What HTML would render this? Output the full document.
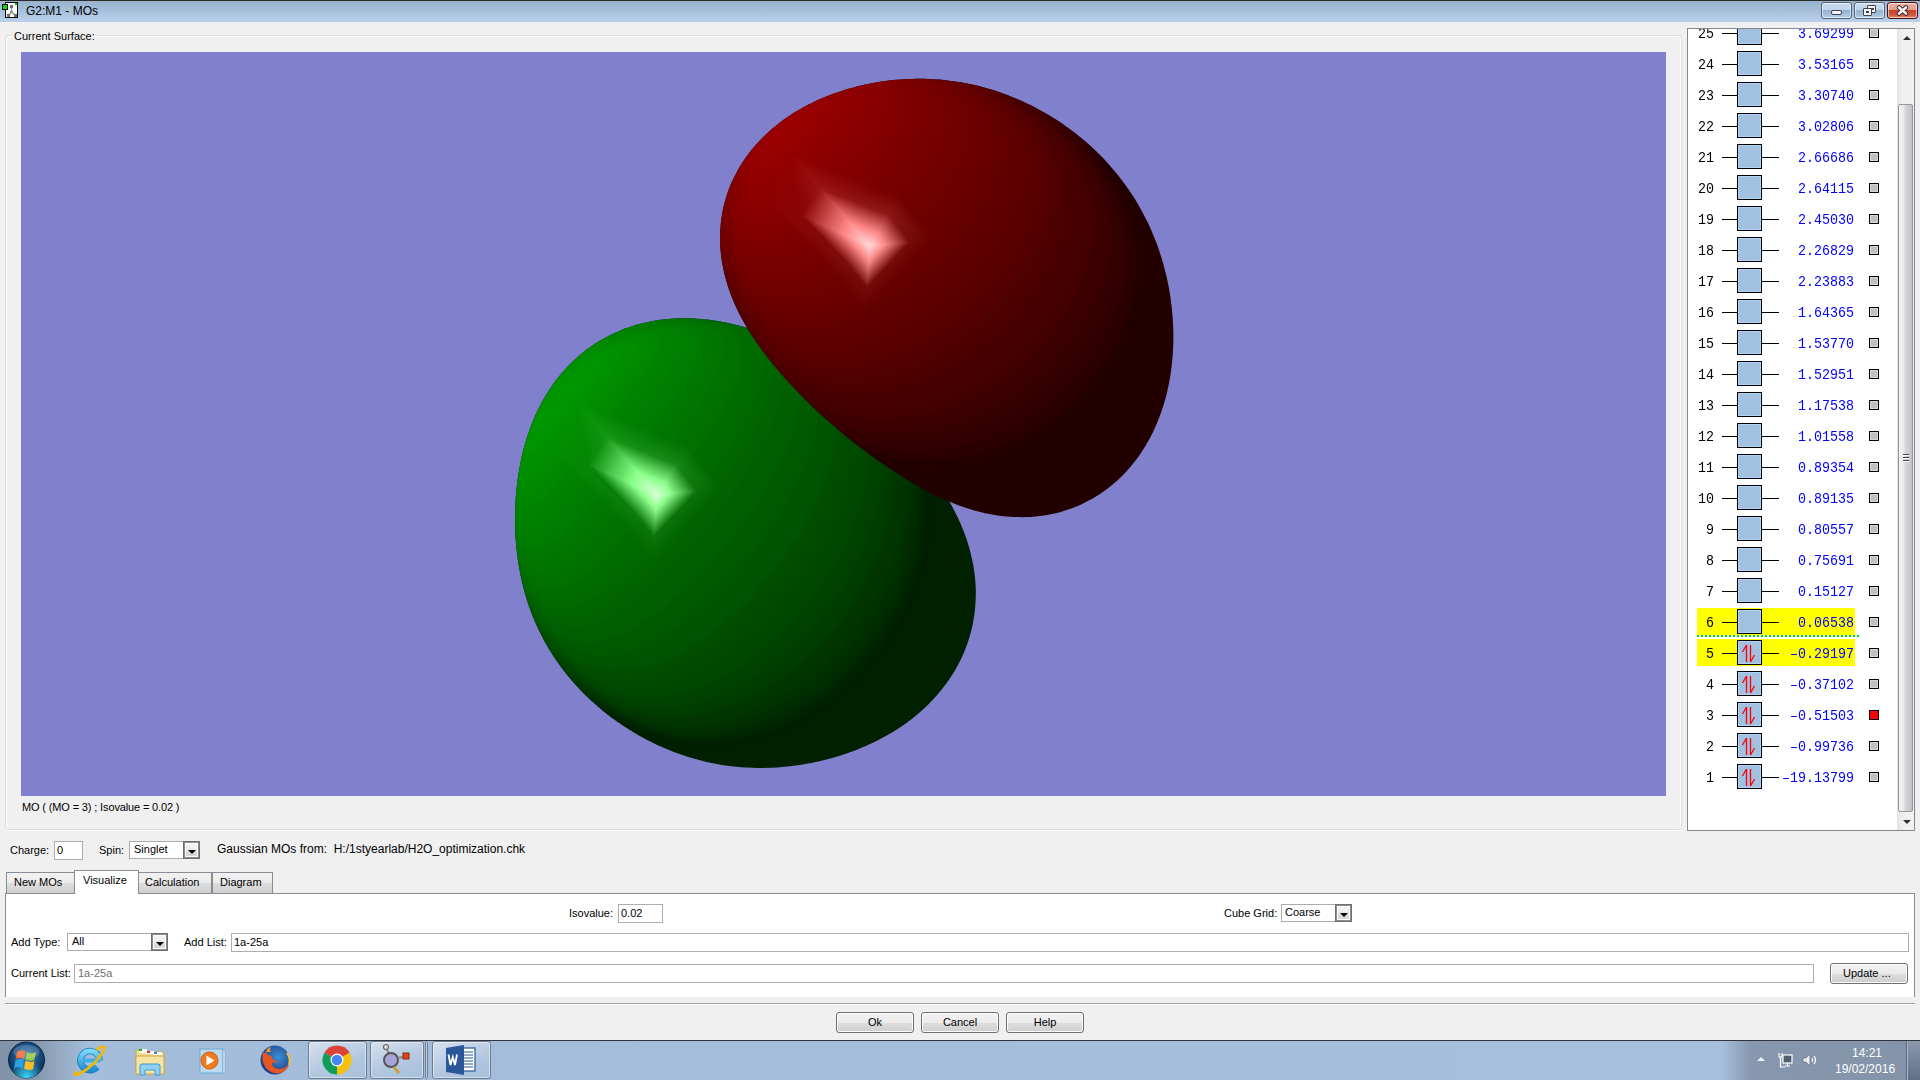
<!DOCTYPE html>
<html><head><meta charset="utf-8"><style>
*{margin:0;padding:0;box-sizing:border-box}
html,body{width:1920px;height:1080px;overflow:hidden;background:#f0f0f0;font-family:"Liberation Sans", sans-serif;font-size:11px;color:#000}
.a{position:absolute}
.t{position:absolute;white-space:pre;line-height:1}
.inp{position:absolute;background:#fff;border:1px solid #abadb3}
.cmb{position:absolute;background:#fff;border:1px solid #acacac}
.cbtn{position:absolute;top:-1px;right:-1px;bottom:-1px;width:17px;border:1px solid #6f6f6f;box-shadow:inset 0 0 0 1px #8c8c8c,inset 0 0 0 2px #fff;background:linear-gradient(#f4f4f4,#eeeeee 45%,#dedede 55%,#d2d2d2)}
.cbtn:after{content:"";position:absolute;left:4px;top:8px;border-left:4px solid transparent;border-right:4px solid transparent;border-top:4px solid #000}
.btn{position:absolute;border:1px solid #707070;border-radius:3px;background:linear-gradient(#f2f2f2,#ebebeb 50%,#dddddd 51%,#cfcfcf);box-shadow:inset 0 0 0 1px #fcfcfc}
.mn{font-family:"Liberation Mono", monospace;font-size:13.33px;line-height:1;transform:scaleY(1.12);transform-origin:0 0}
.box{width:25px;height:25px;border:1px solid #000;background:#a2c0e0;box-shadow:inset 0 0 0 1px #b0d2f6}
.chk{width:10px;height:10px;border:1px solid #000;box-shadow:inset 0 0 0 1px #d8d8d8}
.tab{position:absolute;border:1px solid #898c95;border-bottom:none;background:linear-gradient(#f2f2f2,#ebebeb 50%,#dddddd 51%,#cfcfcf)}
</style></head><body>
<div class="a" style="left:0;top:0;width:1920px;height:22px;background:linear-gradient(#98b1cd,#b9d1ea);border-top:1px solid #2a2a2a"></div>
<div class="t" style="left:26px;top:5px;font-size:12px;color:#000">G2:M1 - MOs</div>
<div class="a" style="left:6px;top:36px;width:1675px;height:795px;border:1px solid #fff;border-radius:3px"></div>
<div class="a" style="left:5px;top:35px;width:1677px;height:795px;border:1px solid #d5dfe5;border-radius:3px"></div>
<div class="t" style="left:12px;top:31px;padding:0 2px;background:#f0f0f0">Current Surface:</div>
<div class="a" style="left:21px;top:52px;width:1645px;height:744px;background:#8080cc;overflow:hidden"></div>
<svg class="a" style="left:21px;top:52px" width="1645" height="744" viewBox="21 52 1645 744"><defs><clipPath id="clr"><path d="M731.5 296.2 L730.0 292.3 L728.6 288.4 L727.4 284.5 L726.2 280.5 L725.1 276.4 L724.1 272.4 L723.2 268.2 L722.4 264.1 L721.7 259.9 L721.1 255.7 L720.7 251.4 L720.3 247.2 L720.1 242.9 L720.0 238.6 L720.1 234.3 L720.3 230.1 L720.6 225.8 L721.0 221.5 L721.6 217.2 L722.3 213.0 L723.1 208.8 L724.1 204.6 L725.2 200.4 L726.5 196.3 L727.8 192.2 L729.3 188.1 L730.9 184.1 L732.7 180.2 L734.6 176.3 L736.6 172.4 L738.7 168.6 L740.9 164.9 L743.2 161.3 L745.7 157.7 L748.2 154.2 L750.8 150.8 L753.6 147.5 L756.4 144.2 L759.3 141.0 L762.3 137.9 L765.4 134.9 L768.6 132.0 L771.8 129.1 L775.1 126.4 L778.4 123.7 L781.9 121.1 L785.3 118.6 L788.9 116.2 L792.4 113.8 L796.0 111.6 L799.7 109.4 L803.4 107.3 L807.1 105.3 L810.9 103.4 L814.7 101.6 L818.5 99.8 L822.3 98.1 L826.2 96.5 L830.0 95.0 L833.9 93.5 L837.8 92.2 L841.8 90.9 L845.7 89.6 L849.6 88.5 L853.6 87.4 L857.5 86.3 L861.5 85.4 L865.4 84.5 L869.4 83.7 L873.3 82.9 L877.3 82.2 L881.2 81.6 L885.2 81.0 L889.1 80.5 L893.0 80.1 L897.0 79.7 L900.9 79.4 L904.8 79.2 L908.7 79.0 L912.6 78.9 L916.5 78.8 L920.4 78.8 L924.3 78.8 L928.1 78.9 L932.0 79.1 L935.8 79.4 L939.6 79.6 L943.4 80.0 L947.2 80.4 L950.9 80.9 L954.7 81.4 L958.4 81.9 L962.1 82.6 L965.8 83.3 L969.5 84.0 L973.2 84.8 L976.8 85.6 L980.4 86.5 L984.0 87.5 L987.6 88.5 L991.1 89.5 L994.6 90.6 L998.1 91.8 L1001.6 93.0 L1005.1 94.2 L1008.5 95.5 L1011.9 96.9 L1015.3 98.2 L1018.6 99.7 L1021.9 101.1 L1025.2 102.7 L1028.5 104.2 L1031.8 105.8 L1035.0 107.5 L1038.2 109.2 L1041.3 110.9 L1044.5 112.7 L1047.6 114.5 L1050.7 116.3 L1053.7 118.2 L1056.7 120.1 L1059.7 122.1 L1062.7 124.1 L1065.6 126.2 L1068.5 128.3 L1071.4 130.4 L1074.3 132.5 L1077.1 134.7 L1079.9 137.0 L1082.7 139.2 L1085.4 141.6 L1088.1 143.9 L1090.7 146.3 L1093.4 148.7 L1096.0 151.2 L1098.5 153.7 L1101.1 156.2 L1103.6 158.8 L1106.0 161.4 L1108.5 164.0 L1110.8 166.7 L1113.2 169.4 L1115.5 172.2 L1117.8 175.0 L1120.0 177.8 L1122.2 180.7 L1124.4 183.6 L1126.5 186.5 L1128.6 189.5 L1130.6 192.5 L1132.6 195.5 L1134.6 198.6 L1136.5 201.7 L1138.3 204.8 L1140.1 208.0 L1141.9 211.2 L1143.6 214.4 L1145.3 217.7 L1147.0 221.0 L1148.6 224.3 L1150.1 227.6 L1151.6 231.0 L1153.0 234.4 L1154.4 237.8 L1155.8 241.3 L1157.1 244.8 L1158.4 248.3 L1159.6 251.9 L1160.7 255.4 L1161.9 259.0 L1162.9 262.6 L1163.9 266.3 L1164.9 269.9 L1165.8 273.6 L1166.7 277.3 L1167.5 281.1 L1168.3 284.8 L1169.0 288.6 L1169.7 292.4 L1170.3 296.2 L1170.8 300.0 L1171.3 303.9 L1171.8 307.8 L1172.2 311.7 L1172.5 315.6 L1172.8 319.5 L1173.0 323.5 L1173.2 327.4 L1173.3 331.4 L1173.4 335.4 L1173.3 339.4 L1173.3 343.5 L1173.1 347.5 L1172.9 351.6 L1172.7 355.6 L1172.3 359.7 L1171.9 363.8 L1171.4 367.8 L1170.9 371.9 L1170.3 376.0 L1169.6 380.1 L1168.8 384.2 L1167.9 388.3 L1167.0 392.4 L1166.0 396.5 L1164.9 400.5 L1163.7 404.6 L1162.4 408.6 L1161.0 412.7 L1159.6 416.6 L1158.0 420.6 L1156.4 424.6 L1154.6 428.5 L1152.8 432.4 L1150.9 436.2 L1148.9 440.0 L1146.7 443.7 L1144.5 447.4 L1142.2 451.1 L1139.8 454.7 L1137.3 458.2 L1134.7 461.6 L1132.0 465.0 L1129.2 468.3 L1126.3 471.5 L1123.3 474.7 L1120.2 477.7 L1117.1 480.7 L1113.8 483.5 L1110.5 486.3 L1107.0 489.0 L1103.5 491.5 L1100.0 494.0 L1096.3 496.3 L1092.6 498.5 L1088.8 500.6 L1085.0 502.6 L1081.1 504.5 L1077.1 506.2 L1073.1 507.8 L1069.1 509.3 L1065.0 510.6 L1060.8 511.9 L1056.7 512.9 L1052.5 513.9 L1048.3 514.8 L1044.0 515.5 L1039.8 516.1 L1035.5 516.5 L1031.3 516.9 L1027.0 517.1 L1022.7 517.2 L1018.5 517.1 L1014.3 517.0 L1010.0 516.8 L1005.9 516.4 L1001.7 516.0 L997.5 515.4 L993.4 514.7 L989.4 514.0 L985.3 513.2 L981.3 512.2 L977.3 511.2 L973.4 510.2 L969.6 509.0 L965.7 507.8 L962.0 506.5 L958.2 505.2 L954.6 503.8 L950.9 502.3 L947.4 500.8 L943.9 499.3 L940.4 497.7 L937.0 496.1 L933.6 494.4 L930.3 492.8 L927.0 491.1 L923.8 489.3 L920.6 487.6 L917.5 485.8 L914.4 484.1 L911.4 482.3 L908.4 480.5 L905.5 478.7 L902.5 476.9 L899.7 475.0 L896.8 473.2 L894.0 471.4 L891.3 469.6 L888.5 467.7 L885.8 465.9 L883.1 464.0 L880.5 462.2 L877.9 460.4 L875.3 458.5 L872.7 456.7 L870.1 454.8 L867.6 452.9 L865.1 451.1 L862.6 449.2 L860.1 447.3 L857.7 445.5 L855.2 443.6 L852.8 441.7 L850.4 439.8 L848.0 437.9 L845.7 435.9 L843.3 434.0 L840.9 432.0 L838.6 430.1 L836.3 428.1 L834.0 426.1 L831.7 424.1 L829.4 422.1 L827.1 420.1 L824.8 418.0 L822.5 416.0 L820.3 413.9 L818.0 411.8 L815.7 409.7 L813.5 407.5 L811.3 405.3 L809.0 403.2 L806.8 401.0 L804.5 398.7 L802.3 396.5 L800.1 394.2 L797.8 391.9 L795.6 389.5 L793.4 387.2 L791.1 384.8 L788.9 382.4 L786.7 379.9 L784.4 377.4 L782.2 374.9 L779.9 372.3 L777.7 369.7 L775.5 367.1 L773.3 364.4 L771.0 361.7 L768.8 358.9 L766.6 356.1 L764.4 353.2 L762.2 350.3 L760.1 347.4 L757.9 344.3 L755.8 341.3 L753.7 338.1 L751.6 335.0 L749.5 331.7 L747.5 328.4 L745.5 325.1 L743.6 321.7 L741.7 318.2 L739.8 314.7 L738.0 311.1 L736.3 307.5 L734.6 303.8 L733.0 300.0Z"/></clipPath><clipPath id="clg"><path d="M516.1 545.0 L515.8 541.0 L515.5 537.0 L515.3 533.0 L515.2 528.9 L515.1 524.9 L515.0 520.8 L515.0 516.8 L515.1 512.7 L515.2 508.6 L515.3 504.5 L515.6 500.4 L515.8 496.3 L516.2 492.2 L516.6 488.1 L517.1 483.9 L517.6 479.8 L518.2 475.7 L518.8 471.5 L519.6 467.4 L520.3 463.2 L521.2 459.1 L522.1 455.0 L523.1 450.8 L524.2 446.7 L525.4 442.6 L526.6 438.5 L528.0 434.4 L529.4 430.3 L530.8 426.3 L532.4 422.3 L534.1 418.3 L535.8 414.3 L537.7 410.4 L539.6 406.5 L541.7 402.6 L543.8 398.8 L546.0 395.0 L548.3 391.3 L550.7 387.7 L553.2 384.1 L555.8 380.5 L558.5 377.1 L561.3 373.7 L564.2 370.4 L567.1 367.1 L570.2 364.0 L573.3 360.9 L576.6 357.9 L579.9 355.0 L583.3 352.3 L586.7 349.6 L590.3 347.0 L593.9 344.5 L597.6 342.1 L601.4 339.9 L605.2 337.7 L609.1 335.7 L613.0 333.7 L617.0 331.9 L621.0 330.2 L625.1 328.6 L629.2 327.2 L633.3 325.8 L637.5 324.6 L641.7 323.5 L645.9 322.5 L650.2 321.6 L654.4 320.8 L658.7 320.1 L662.9 319.5 L667.2 319.1 L671.5 318.7 L675.7 318.5 L680.0 318.3 L684.2 318.3 L688.5 318.3 L692.7 318.4 L696.9 318.7 L701.1 319.0 L705.2 319.4 L709.3 319.8 L713.4 320.4 L717.5 321.0 L721.5 321.7 L725.5 322.5 L729.5 323.3 L733.4 324.2 L737.3 325.2 L741.2 326.2 L745.0 327.3 L748.8 328.4 L752.5 329.6 L756.2 330.9 L759.9 332.1 L763.5 333.5 L767.1 334.9 L770.6 336.3 L774.1 337.7 L777.6 339.2 L781.0 340.8 L784.4 342.4 L787.7 344.0 L791.0 345.6 L794.3 347.3 L797.5 349.0 L800.7 350.8 L803.8 352.5 L806.9 354.3 L810.0 356.2 L813.0 358.0 L816.0 359.9 L819.0 361.8 L821.9 363.8 L824.8 365.7 L827.7 367.7 L830.5 369.7 L833.3 371.8 L836.0 373.8 L838.7 375.9 L841.4 378.0 L844.1 380.1 L846.7 382.3 L849.3 384.4 L851.8 386.6 L854.4 388.8 L856.9 391.0 L859.4 393.2 L861.8 395.5 L864.3 397.7 L866.7 400.0 L869.1 402.3 L871.4 404.6 L873.8 406.9 L876.1 409.2 L878.4 411.6 L880.7 413.9 L883.0 416.3 L885.3 418.7 L887.6 421.1 L889.8 423.5 L892.0 425.9 L894.3 428.4 L896.5 430.8 L898.7 433.3 L900.9 435.8 L903.1 438.3 L905.3 440.9 L907.5 443.4 L909.7 446.0 L911.9 448.6 L914.1 451.3 L916.2 453.9 L918.4 456.6 L920.6 459.4 L922.7 462.1 L924.9 464.9 L927.0 467.7 L929.1 470.6 L931.3 473.5 L933.4 476.4 L935.4 479.4 L937.5 482.4 L939.6 485.5 L941.6 488.6 L943.6 491.8 L945.6 495.0 L947.5 498.2 L949.4 501.6 L951.3 504.9 L953.1 508.3 L954.9 511.8 L956.6 515.3 L958.3 518.8 L960.0 522.4 L961.5 526.1 L963.0 529.8 L964.5 533.5 L965.9 537.3 L967.2 541.1 L968.4 545.0 L969.5 548.9 L970.6 552.9 L971.5 556.9 L972.4 560.9 L973.2 565.0 L973.9 569.1 L974.5 573.2 L975.0 577.3 L975.3 581.5 L975.6 585.7 L975.8 589.9 L975.8 594.1 L975.7 598.3 L975.5 602.5 L975.2 606.7 L974.8 610.9 L974.3 615.1 L973.6 619.3 L972.9 623.5 L972.0 627.6 L971.0 631.7 L969.8 635.8 L968.6 639.9 L967.2 643.9 L965.7 647.9 L964.2 651.9 L962.5 655.8 L960.7 659.7 L958.7 663.5 L956.7 667.2 L954.6 670.9 L952.4 674.6 L950.0 678.2 L947.6 681.7 L945.1 685.1 L942.5 688.5 L939.8 691.8 L937.1 695.1 L934.2 698.2 L931.3 701.3 L928.3 704.4 L925.3 707.3 L922.1 710.2 L919.0 713.0 L915.7 715.7 L912.4 718.4 L909.1 720.9 L905.7 723.4 L902.2 725.9 L898.7 728.2 L895.2 730.5 L891.6 732.7 L888.0 734.8 L884.4 736.8 L880.7 738.8 L877.0 740.7 L873.3 742.5 L869.5 744.3 L865.8 746.0 L862.0 747.6 L858.2 749.2 L854.4 750.7 L850.5 752.1 L846.7 753.5 L842.8 754.8 L838.9 756.0 L835.1 757.2 L831.2 758.3 L827.3 759.3 L823.4 760.3 L819.5 761.2 L815.5 762.1 L811.6 762.9 L807.7 763.6 L803.8 764.3 L799.8 764.9 L795.9 765.5 L792.0 766.0 L788.0 766.5 L784.1 766.8 L780.2 767.2 L776.3 767.4 L772.3 767.7 L768.4 767.8 L764.5 767.9 L760.6 767.9 L756.7 767.9 L752.8 767.8 L748.9 767.6 L745.0 767.4 L741.1 767.2 L737.3 766.8 L733.4 766.4 L729.5 766.0 L725.7 765.4 L721.9 764.9 L718.1 764.2 L714.3 763.5 L710.5 762.8 L706.7 762.0 L703.0 761.1 L699.3 760.1 L695.6 759.1 L691.9 758.1 L688.2 757.0 L684.6 755.8 L680.9 754.6 L677.3 753.3 L673.7 752.0 L670.2 750.6 L666.6 749.1 L663.1 747.6 L659.6 746.1 L656.2 744.5 L652.8 742.8 L649.3 741.1 L646.0 739.4 L642.6 737.6 L639.3 735.7 L636.0 733.8 L632.7 731.8 L629.5 729.8 L626.3 727.8 L623.1 725.7 L620.0 723.6 L616.9 721.4 L613.8 719.1 L610.7 716.9 L607.7 714.6 L604.7 712.2 L601.8 709.8 L598.8 707.3 L596.0 704.8 L593.1 702.3 L590.3 699.7 L587.5 697.1 L584.8 694.4 L582.1 691.7 L579.5 688.9 L576.8 686.1 L574.3 683.2 L571.8 680.4 L569.3 677.4 L566.8 674.4 L564.4 671.4 L562.1 668.4 L559.8 665.3 L557.6 662.1 L555.4 658.9 L553.2 655.7 L551.2 652.5 L549.1 649.2 L547.1 645.8 L545.2 642.4 L543.4 639.0 L541.6 635.6 L539.8 632.1 L538.1 628.6 L536.5 625.0 L534.9 621.5 L533.4 617.9 L532.0 614.2 L530.6 610.6 L529.2 606.9 L528.0 603.2 L526.8 599.4 L525.6 595.6 L524.5 591.9 L523.5 588.1 L522.6 584.2 L521.7 580.4 L520.8 576.5 L520.0 572.6 L519.3 568.7 L518.6 564.8 L518.0 560.9 L517.5 556.9 L517.0 553.0 L516.5 549.0Z"/></clipPath><filter id="bl" x="-5%" y="-5%" width="110%" height="110%"><feGaussianBlur stdDeviation="2"/></filter><linearGradient id="hg0" gradientUnits="userSpaceOnUse" x1="671.33" y1="457.67" x2="654.47" y2="501.59"><stop offset="0" stop-color="#ffffff" stop-opacity="0"/><stop offset="1" stop-color="#ffffff"/></linearGradient><linearGradient id="hg1" gradientUnits="userSpaceOnUse" x1="614.83" y1="417.00" x2="517.01" y2="666.98"><stop offset="0" stop-color="#ffffff" stop-opacity="0"/><stop offset="1" stop-color="#ffffff"/></linearGradient><linearGradient id="hg2" gradientUnits="userSpaceOnUse" x1="613.34" y1="419.12" x2="534.05" y2="642.60"><stop offset="0" stop-color="#ffffff" stop-opacity="0"/><stop offset="1" stop-color="#ffffff"/></linearGradient><linearGradient id="hg3" gradientUnits="userSpaceOnUse" x1="687.65" y1="474.15" x2="651.59" y2="498.68"><stop offset="0" stop-color="#ffffff" stop-opacity="0"/><stop offset="1" stop-color="#ffffff"/></linearGradient><linearGradient id="hg4" gradientUnits="userSpaceOnUse" x1="692.12" y1="451.46" x2="513.04" y2="590.75"><stop offset="0" stop-color="#ffffff" stop-opacity="0"/><stop offset="1" stop-color="#ffffff"/></linearGradient><linearGradient id="hg5" gradientUnits="userSpaceOnUse" x1="724.06" y1="478.42" x2="190.11" y2="318.23"><stop offset="0" stop-color="#ffffff" stop-opacity="0"/><stop offset="1" stop-color="#ffffff"/></linearGradient><linearGradient id="hg6" gradientUnits="userSpaceOnUse" x1="677.31" y1="513.98" x2="653.42" y2="491.65"><stop offset="0" stop-color="#ffffff" stop-opacity="0"/><stop offset="1" stop-color="#ffffff"/></linearGradient><linearGradient id="hg7" gradientUnits="userSpaceOnUse" x1="708.61" y1="501.85" x2="418.34" y2="230.51"><stop offset="0" stop-color="#ffffff" stop-opacity="0"/><stop offset="1" stop-color="#ffffff"/></linearGradient><linearGradient id="hg8" gradientUnits="userSpaceOnUse" x1="708.61" y1="501.85" x2="418.34" y2="230.51"><stop offset="0" stop-color="#ffffff" stop-opacity="0"/><stop offset="1" stop-color="#ffffff"/></linearGradient><linearGradient id="hg9" gradientUnits="userSpaceOnUse" x1="633.54" y1="514.02" x2="661.14" y2="491.64"><stop offset="0" stop-color="#ffffff" stop-opacity="0"/><stop offset="1" stop-color="#ffffff"/></linearGradient><linearGradient id="hg10" gradientUnits="userSpaceOnUse" x1="640.63" y1="547.58" x2="974.89" y2="282.96"><stop offset="0" stop-color="#ffffff" stop-opacity="0"/><stop offset="1" stop-color="#ffffff"/></linearGradient><linearGradient id="hg11" gradientUnits="userSpaceOnUse" x1="644.35" y1="546.56" x2="885.56" y2="307.56"><stop offset="0" stop-color="#ffffff" stop-opacity="0"/><stop offset="1" stop-color="#ffffff"/></linearGradient><linearGradient id="hg12" gradientUnits="userSpaceOnUse" x1="634.92" y1="515.52" x2="660.90" y2="491.38"><stop offset="0" stop-color="#ffffff" stop-opacity="0"/><stop offset="1" stop-color="#ffffff"/></linearGradient><linearGradient id="hg13" gradientUnits="userSpaceOnUse" x1="622.73" y1="524.77" x2="868.13" y2="289.38"><stop offset="0" stop-color="#ffffff" stop-opacity="0"/><stop offset="1" stop-color="#ffffff"/></linearGradient><linearGradient id="hg14" gradientUnits="userSpaceOnUse" x1="544.55" y1="448.27" x2="2353.60" y2="1742.90"><stop offset="0" stop-color="#ffffff" stop-opacity="0"/><stop offset="1" stop-color="#ffffff"/></linearGradient><linearGradient id="hg15" gradientUnits="userSpaceOnUse" x1="587.16" y1="461.53" x2="669.32" y2="500.91"><stop offset="0" stop-color="#ffffff" stop-opacity="0"/><stop offset="1" stop-color="#ffffff"/></linearGradient><linearGradient id="hg16" gradientUnits="userSpaceOnUse" x1="551.56" y1="438.36" x2="2373.69" y2="1720.59"><stop offset="0" stop-color="#ffffff" stop-opacity="0"/><stop offset="1" stop-color="#ffffff"/></linearGradient><linearGradient id="hg17" gradientUnits="userSpaceOnUse" x1="581.10" y1="464.45" x2="925.93" y2="441.73"><stop offset="0" stop-color="#ffffff" stop-opacity="0"/><stop offset="1" stop-color="#ffffff"/></linearGradient><linearGradient id="hr0" gradientUnits="userSpaceOnUse" x1="884.33" y1="208.67" x2="867.47" y2="252.59"><stop offset="0" stop-color="#ffffff" stop-opacity="0"/><stop offset="1" stop-color="#ffffff"/></linearGradient><linearGradient id="hr1" gradientUnits="userSpaceOnUse" x1="827.83" y1="168.00" x2="730.01" y2="417.98"><stop offset="0" stop-color="#ffffff" stop-opacity="0"/><stop offset="1" stop-color="#ffffff"/></linearGradient><linearGradient id="hr2" gradientUnits="userSpaceOnUse" x1="826.34" y1="170.12" x2="747.05" y2="393.60"><stop offset="0" stop-color="#ffffff" stop-opacity="0"/><stop offset="1" stop-color="#ffffff"/></linearGradient><linearGradient id="hr3" gradientUnits="userSpaceOnUse" x1="900.65" y1="225.15" x2="864.59" y2="249.68"><stop offset="0" stop-color="#ffffff" stop-opacity="0"/><stop offset="1" stop-color="#ffffff"/></linearGradient><linearGradient id="hr4" gradientUnits="userSpaceOnUse" x1="905.12" y1="202.46" x2="726.04" y2="341.75"><stop offset="0" stop-color="#ffffff" stop-opacity="0"/><stop offset="1" stop-color="#ffffff"/></linearGradient><linearGradient id="hr5" gradientUnits="userSpaceOnUse" x1="937.06" y1="229.42" x2="403.11" y2="69.23"><stop offset="0" stop-color="#ffffff" stop-opacity="0"/><stop offset="1" stop-color="#ffffff"/></linearGradient><linearGradient id="hr6" gradientUnits="userSpaceOnUse" x1="890.31" y1="264.98" x2="866.42" y2="242.65"><stop offset="0" stop-color="#ffffff" stop-opacity="0"/><stop offset="1" stop-color="#ffffff"/></linearGradient><linearGradient id="hr7" gradientUnits="userSpaceOnUse" x1="921.61" y1="252.85" x2="631.34" y2="-18.49"><stop offset="0" stop-color="#ffffff" stop-opacity="0"/><stop offset="1" stop-color="#ffffff"/></linearGradient><linearGradient id="hr8" gradientUnits="userSpaceOnUse" x1="921.61" y1="252.85" x2="631.34" y2="-18.49"><stop offset="0" stop-color="#ffffff" stop-opacity="0"/><stop offset="1" stop-color="#ffffff"/></linearGradient><linearGradient id="hr9" gradientUnits="userSpaceOnUse" x1="846.54" y1="265.02" x2="874.14" y2="242.64"><stop offset="0" stop-color="#ffffff" stop-opacity="0"/><stop offset="1" stop-color="#ffffff"/></linearGradient><linearGradient id="hr10" gradientUnits="userSpaceOnUse" x1="853.63" y1="298.58" x2="1187.89" y2="33.96"><stop offset="0" stop-color="#ffffff" stop-opacity="0"/><stop offset="1" stop-color="#ffffff"/></linearGradient><linearGradient id="hr11" gradientUnits="userSpaceOnUse" x1="857.35" y1="297.56" x2="1098.56" y2="58.56"><stop offset="0" stop-color="#ffffff" stop-opacity="0"/><stop offset="1" stop-color="#ffffff"/></linearGradient><linearGradient id="hr12" gradientUnits="userSpaceOnUse" x1="847.92" y1="266.52" x2="873.90" y2="242.38"><stop offset="0" stop-color="#ffffff" stop-opacity="0"/><stop offset="1" stop-color="#ffffff"/></linearGradient><linearGradient id="hr13" gradientUnits="userSpaceOnUse" x1="835.73" y1="275.77" x2="1081.13" y2="40.38"><stop offset="0" stop-color="#ffffff" stop-opacity="0"/><stop offset="1" stop-color="#ffffff"/></linearGradient><linearGradient id="hr14" gradientUnits="userSpaceOnUse" x1="757.55" y1="199.27" x2="2566.60" y2="1493.90"><stop offset="0" stop-color="#ffffff" stop-opacity="0"/><stop offset="1" stop-color="#ffffff"/></linearGradient><linearGradient id="hr15" gradientUnits="userSpaceOnUse" x1="800.16" y1="212.53" x2="882.32" y2="251.91"><stop offset="0" stop-color="#ffffff" stop-opacity="0"/><stop offset="1" stop-color="#ffffff"/></linearGradient><linearGradient id="hr16" gradientUnits="userSpaceOnUse" x1="764.56" y1="189.36" x2="2586.69" y2="1471.59"><stop offset="0" stop-color="#ffffff" stop-opacity="0"/><stop offset="1" stop-color="#ffffff"/></linearGradient><linearGradient id="hr17" gradientUnits="userSpaceOnUse" x1="794.10" y1="215.45" x2="1138.93" y2="192.73"><stop offset="0" stop-color="#ffffff" stop-opacity="0"/><stop offset="1" stop-color="#ffffff"/></linearGradient></defs><path d="M516.1 545.0 L515.8 541.0 L515.5 537.0 L515.3 533.0 L515.2 528.9 L515.1 524.9 L515.0 520.8 L515.0 516.8 L515.1 512.7 L515.2 508.6 L515.3 504.5 L515.6 500.4 L515.8 496.3 L516.2 492.2 L516.6 488.1 L517.1 483.9 L517.6 479.8 L518.2 475.7 L518.8 471.5 L519.6 467.4 L520.3 463.2 L521.2 459.1 L522.1 455.0 L523.1 450.8 L524.2 446.7 L525.4 442.6 L526.6 438.5 L528.0 434.4 L529.4 430.3 L530.8 426.3 L532.4 422.3 L534.1 418.3 L535.8 414.3 L537.7 410.4 L539.6 406.5 L541.7 402.6 L543.8 398.8 L546.0 395.0 L548.3 391.3 L550.7 387.7 L553.2 384.1 L555.8 380.5 L558.5 377.1 L561.3 373.7 L564.2 370.4 L567.1 367.1 L570.2 364.0 L573.3 360.9 L576.6 357.9 L579.9 355.0 L583.3 352.3 L586.7 349.6 L590.3 347.0 L593.9 344.5 L597.6 342.1 L601.4 339.9 L605.2 337.7 L609.1 335.7 L613.0 333.7 L617.0 331.9 L621.0 330.2 L625.1 328.6 L629.2 327.2 L633.3 325.8 L637.5 324.6 L641.7 323.5 L645.9 322.5 L650.2 321.6 L654.4 320.8 L658.7 320.1 L662.9 319.5 L667.2 319.1 L671.5 318.7 L675.7 318.5 L680.0 318.3 L684.2 318.3 L688.5 318.3 L692.7 318.4 L696.9 318.7 L701.1 319.0 L705.2 319.4 L709.3 319.8 L713.4 320.4 L717.5 321.0 L721.5 321.7 L725.5 322.5 L729.5 323.3 L733.4 324.2 L737.3 325.2 L741.2 326.2 L745.0 327.3 L748.8 328.4 L752.5 329.6 L756.2 330.9 L759.9 332.1 L763.5 333.5 L767.1 334.9 L770.6 336.3 L774.1 337.7 L777.6 339.2 L781.0 340.8 L784.4 342.4 L787.7 344.0 L791.0 345.6 L794.3 347.3 L797.5 349.0 L800.7 350.8 L803.8 352.5 L806.9 354.3 L810.0 356.2 L813.0 358.0 L816.0 359.9 L819.0 361.8 L821.9 363.8 L824.8 365.7 L827.7 367.7 L830.5 369.7 L833.3 371.8 L836.0 373.8 L838.7 375.9 L841.4 378.0 L844.1 380.1 L846.7 382.3 L849.3 384.4 L851.8 386.6 L854.4 388.8 L856.9 391.0 L859.4 393.2 L861.8 395.5 L864.3 397.7 L866.7 400.0 L869.1 402.3 L871.4 404.6 L873.8 406.9 L876.1 409.2 L878.4 411.6 L880.7 413.9 L883.0 416.3 L885.3 418.7 L887.6 421.1 L889.8 423.5 L892.0 425.9 L894.3 428.4 L896.5 430.8 L898.7 433.3 L900.9 435.8 L903.1 438.3 L905.3 440.9 L907.5 443.4 L909.7 446.0 L911.9 448.6 L914.1 451.3 L916.2 453.9 L918.4 456.6 L920.6 459.4 L922.7 462.1 L924.9 464.9 L927.0 467.7 L929.1 470.6 L931.3 473.5 L933.4 476.4 L935.4 479.4 L937.5 482.4 L939.6 485.5 L941.6 488.6 L943.6 491.8 L945.6 495.0 L947.5 498.2 L949.4 501.6 L951.3 504.9 L953.1 508.3 L954.9 511.8 L956.6 515.3 L958.3 518.8 L960.0 522.4 L961.5 526.1 L963.0 529.8 L964.5 533.5 L965.9 537.3 L967.2 541.1 L968.4 545.0 L969.5 548.9 L970.6 552.9 L971.5 556.9 L972.4 560.9 L973.2 565.0 L973.9 569.1 L974.5 573.2 L975.0 577.3 L975.3 581.5 L975.6 585.7 L975.8 589.9 L975.8 594.1 L975.7 598.3 L975.5 602.5 L975.2 606.7 L974.8 610.9 L974.3 615.1 L973.6 619.3 L972.9 623.5 L972.0 627.6 L971.0 631.7 L969.8 635.8 L968.6 639.9 L967.2 643.9 L965.7 647.9 L964.2 651.9 L962.5 655.8 L960.7 659.7 L958.7 663.5 L956.7 667.2 L954.6 670.9 L952.4 674.6 L950.0 678.2 L947.6 681.7 L945.1 685.1 L942.5 688.5 L939.8 691.8 L937.1 695.1 L934.2 698.2 L931.3 701.3 L928.3 704.4 L925.3 707.3 L922.1 710.2 L919.0 713.0 L915.7 715.7 L912.4 718.4 L909.1 720.9 L905.7 723.4 L902.2 725.9 L898.7 728.2 L895.2 730.5 L891.6 732.7 L888.0 734.8 L884.4 736.8 L880.7 738.8 L877.0 740.7 L873.3 742.5 L869.5 744.3 L865.8 746.0 L862.0 747.6 L858.2 749.2 L854.4 750.7 L850.5 752.1 L846.7 753.5 L842.8 754.8 L838.9 756.0 L835.1 757.2 L831.2 758.3 L827.3 759.3 L823.4 760.3 L819.5 761.2 L815.5 762.1 L811.6 762.9 L807.7 763.6 L803.8 764.3 L799.8 764.9 L795.9 765.5 L792.0 766.0 L788.0 766.5 L784.1 766.8 L780.2 767.2 L776.3 767.4 L772.3 767.7 L768.4 767.8 L764.5 767.9 L760.6 767.9 L756.7 767.9 L752.8 767.8 L748.9 767.6 L745.0 767.4 L741.1 767.2 L737.3 766.8 L733.4 766.4 L729.5 766.0 L725.7 765.4 L721.9 764.9 L718.1 764.2 L714.3 763.5 L710.5 762.8 L706.7 762.0 L703.0 761.1 L699.3 760.1 L695.6 759.1 L691.9 758.1 L688.2 757.0 L684.6 755.8 L680.9 754.6 L677.3 753.3 L673.7 752.0 L670.2 750.6 L666.6 749.1 L663.1 747.6 L659.6 746.1 L656.2 744.5 L652.8 742.8 L649.3 741.1 L646.0 739.4 L642.6 737.6 L639.3 735.7 L636.0 733.8 L632.7 731.8 L629.5 729.8 L626.3 727.8 L623.1 725.7 L620.0 723.6 L616.9 721.4 L613.8 719.1 L610.7 716.9 L607.7 714.6 L604.7 712.2 L601.8 709.8 L598.8 707.3 L596.0 704.8 L593.1 702.3 L590.3 699.7 L587.5 697.1 L584.8 694.4 L582.1 691.7 L579.5 688.9 L576.8 686.1 L574.3 683.2 L571.8 680.4 L569.3 677.4 L566.8 674.4 L564.4 671.4 L562.1 668.4 L559.8 665.3 L557.6 662.1 L555.4 658.9 L553.2 655.7 L551.2 652.5 L549.1 649.2 L547.1 645.8 L545.2 642.4 L543.4 639.0 L541.6 635.6 L539.8 632.1 L538.1 628.6 L536.5 625.0 L534.9 621.5 L533.4 617.9 L532.0 614.2 L530.6 610.6 L529.2 606.9 L528.0 603.2 L526.8 599.4 L525.6 595.6 L524.5 591.9 L523.5 588.1 L522.6 584.2 L521.7 580.4 L520.8 576.5 L520.0 572.6 L519.3 568.7 L518.6 564.8 L518.0 560.9 L517.5 556.9 L517.0 553.0 L516.5 549.0Z" fill="#002000"/><g clip-path="url(#clg)"><g filter="url(#bl)"><path d="M646.5 318.5 625.5 324.0 611.0 330.0 601.0 335.0 584.0 346.0 568.5 359.5 557.0 372.0 547.0 385.0 534.5 407.0 521.0 443.0 518.0 455.0 513.0 487.0 512.0 503.5 512.0 534.0 513.0 550.0 515.0 566.0 521.0 594.0 526.0 610.5 533.5 628.5 543.5 648.5 558.5 671.0 575.0 690.5 591.0 706.5 612.0 723.0 613.0 723.0 618.5 717.0 630.5 724.5 653.5 734.5 669.5 739.0 692.0 742.5 721.5 742.5 740.0 740.0 753.5 737.0 774.0 730.5 799.5 719.0 816.5 709.0 834.0 696.5 854.0 679.0 865.0 667.5 880.5 648.5 893.5 629.0 905.5 606.5 912.5 590.0 919.5 568.5 924.5 546.0 927.0 524.5 927.0 497.0 925.5 483.0 921.5 463.0 915.5 446.0 889.5 416.5 866.5 393.5 846.0 376.0 827.5 362.0 800.0 345.5 777.5 334.5 773.0 333.5 763.5 329.0 739.5 321.5 725.5 318.5 702.0 315.5 666.5 315.5Z" fill="#002400" fill-rule="evenodd"/><path d="M646.5 318.5 625.5 324.0 611.0 330.0 601.0 335.0 584.0 346.0 568.5 359.5 557.0 372.0 547.0 385.0 534.5 407.0 521.0 443.0 518.0 455.0 513.0 487.0 512.0 503.5 512.0 534.0 515.0 566.0 518.5 584.0 526.0 610.5 533.5 628.5 547.5 655.0 560.0 673.0 575.0 690.5 591.0 706.5 605.5 718.5 612.0 712.0 625.0 720.5 644.0 729.5 661.0 735.0 678.5 738.5 694.0 740.0 711.0 740.0 727.0 738.5 741.0 736.0 758.0 731.5 780.5 723.0 799.5 713.5 820.0 700.5 839.0 685.5 859.0 666.0 872.5 650.0 886.5 630.0 895.0 615.5 908.0 587.5 914.5 568.5 920.0 545.5 923.0 523.0 923.5 499.0 922.0 481.5 918.5 462.5 915.0 450.0 911.5 441.5 889.5 416.5 866.5 393.5 846.0 376.0 827.5 362.0 800.0 345.5 777.5 334.5 773.0 333.5 763.5 329.0 739.5 321.5 725.5 318.5 702.0 315.5 666.5 315.5Z" fill="#002800" fill-rule="evenodd"/><path d="M642.0 319.5 621.5 325.5 601.0 335.0 584.0 346.0 568.5 359.5 559.5 369.0 548.0 383.5 538.0 400.0 531.0 415.0 523.0 436.5 518.0 455.0 514.5 475.0 512.0 503.5 512.0 534.0 515.0 566.0 518.5 584.0 526.0 610.5 533.5 628.5 543.5 648.5 558.5 671.0 575.0 690.5 599.0 713.0 605.0 707.0 606.0 707.0 621.5 717.5 634.5 724.0 650.5 730.0 669.0 734.5 692.5 737.0 712.0 736.5 724.5 735.0 744.0 731.0 763.0 725.0 777.5 719.0 803.5 705.0 823.5 691.0 841.0 676.0 857.0 659.5 870.5 643.0 882.5 625.5 897.5 598.0 906.0 577.5 912.5 556.5 916.5 538.0 919.0 517.5 919.5 497.0 917.0 471.0 913.0 453.0 908.0 438.0 898.5 426.5 866.5 393.5 854.0 382.5 827.5 362.0 824.0 360.5 812.5 352.5 777.5 334.5 773.0 333.5 763.5 329.0 737.5 321.0 722.5 318.0 702.0 315.5 666.5 315.5Z" fill="#002a00" fill-rule="evenodd"/><path d="M666.5 315.5 646.5 318.5 625.5 324.0 601.0 335.0 584.0 346.0 568.5 359.5 559.5 369.0 547.0 385.0 545.0 389.5 538.0 400.0 531.0 415.0 523.0 436.5 518.0 455.0 513.0 487.0 512.0 503.5 512.0 534.0 513.0 550.0 515.0 566.0 521.0 594.0 526.0 610.5 533.5 628.5 543.5 648.5 558.5 671.0 575.0 690.5 592.5 707.5 599.5 701.5 612.5 711.0 628.0 719.5 640.0 724.5 659.0 730.0 684.5 733.5 709.0 733.0 726.5 730.5 746.5 725.5 771.5 716.0 790.0 706.5 815.0 690.0 832.5 675.5 850.0 658.0 863.0 642.5 874.5 626.5 887.0 605.5 897.0 584.5 905.5 561.0 910.0 544.0 914.0 520.0 915.0 507.0 915.0 488.5 914.0 476.5 909.5 452.0 902.5 431.5 889.5 416.5 866.5 393.5 846.0 376.0 827.5 362.0 800.0 345.5 777.5 334.5 743.0 322.5 725.5 318.5 702.0 315.5Z" fill="#002e00" fill-rule="evenodd"/><path d="M666.5 315.5 646.5 318.5 625.5 324.0 601.0 335.0 584.0 346.0 568.5 359.5 559.5 369.0 547.0 385.0 545.0 389.5 538.0 400.0 531.0 415.0 523.0 436.5 518.0 455.0 513.0 487.0 512.0 503.5 512.0 534.0 513.0 550.0 515.0 566.0 521.0 594.0 526.0 610.5 533.5 628.5 543.5 648.5 558.5 671.0 575.0 690.5 586.5 701.5 593.5 696.0 603.5 704.0 621.0 714.5 636.0 721.0 652.5 726.0 669.0 729.0 681.0 730.0 703.0 729.5 718.0 727.5 739.0 722.5 760.0 715.0 781.5 704.5 801.5 692.0 821.5 676.5 839.0 660.0 852.0 645.5 864.0 630.0 877.0 610.0 889.0 587.0 897.0 567.5 903.0 548.5 908.0 525.0 910.5 498.5 910.0 478.5 906.5 454.5 903.0 441.0 897.0 425.0 866.5 393.5 846.0 376.0 827.5 362.0 800.0 345.5 777.5 334.5 743.0 322.5 725.5 318.5 702.0 315.5Z" fill="#003000" fill-rule="evenodd"/><path d="M666.5 315.5 646.5 318.5 625.5 324.0 601.0 335.0 584.0 346.0 568.5 359.5 559.5 369.0 547.0 385.0 545.0 389.5 538.0 400.0 531.0 415.0 523.0 436.5 518.0 455.0 513.0 487.0 512.0 503.5 512.0 534.0 513.0 550.0 515.0 566.0 521.0 594.0 526.0 610.5 533.5 628.5 543.5 648.5 555.0 666.0 567.5 682.0 580.0 695.5 586.5 690.5 588.0 690.5 601.5 701.5 616.5 710.5 628.5 716.0 647.0 722.0 672.5 726.0 693.5 726.0 713.5 723.5 735.5 718.0 752.0 712.0 773.0 702.0 797.0 687.0 809.5 677.5 826.5 662.5 843.5 644.5 857.0 627.5 871.5 605.5 884.5 580.5 891.5 563.5 897.5 545.0 903.0 520.0 905.5 494.5 905.0 472.5 903.0 457.0 899.5 441.5 891.0 418.5 861.5 389.0 827.5 362.0 800.0 345.5 777.5 334.5 743.0 322.5 725.5 318.5 702.0 315.5Z" fill="#003400" fill-rule="evenodd"/><path d="M666.5 315.5 646.5 318.5 625.5 324.0 601.0 335.0 584.0 346.0 575.0 353.5 562.5 365.5 548.0 383.5 538.0 400.0 531.0 415.0 523.0 436.5 518.0 455.0 513.0 487.0 512.0 503.5 512.0 534.0 515.0 566.0 518.5 584.0 526.0 610.5 533.5 628.5 543.5 648.5 558.5 671.0 574.5 689.5 582.0 684.5 591.5 693.0 607.0 703.5 619.5 710.0 637.0 716.5 662.5 721.5 686.5 722.0 707.0 719.5 727.5 714.5 745.5 708.0 765.5 698.5 787.5 685.0 806.5 670.5 814.5 663.5 839.0 638.0 855.5 616.5 867.5 597.5 876.5 580.5 887.0 555.5 892.5 538.0 898.0 512.5 900.0 494.0 900.0 471.0 898.5 456.5 894.5 437.5 890.5 425.0 885.0 412.5 861.5 389.0 827.5 362.0 800.0 345.5 777.5 334.5 743.0 322.5 725.5 318.5 702.0 315.5Z" fill="#003600" fill-rule="evenodd"/><path d="M702.0 315.5 666.5 315.5 646.5 318.5 625.5 324.0 601.0 335.0 584.0 346.0 575.0 353.5 562.5 365.5 549.5 381.5 534.5 407.0 521.0 443.0 518.0 455.0 513.0 487.0 512.0 503.5 512.0 534.0 515.0 566.0 518.5 584.0 526.0 610.5 533.5 628.5 547.5 655.0 558.5 671.0 568.5 683.0 576.0 678.0 592.5 692.5 604.0 700.0 614.5 705.5 635.0 713.0 655.5 717.0 683.0 717.5 692.5 716.5 716.5 711.5 733.0 706.0 758.0 694.5 774.0 685.0 789.0 674.5 806.5 660.0 826.5 640.0 843.0 620.0 857.0 599.5 867.5 581.0 876.0 563.0 884.5 540.0 890.5 517.0 893.5 498.0 894.5 486.0 894.5 467.0 892.5 448.5 889.5 434.5 884.5 419.0 878.0 405.0 866.5 393.5 846.0 376.0 827.5 362.0 800.0 345.5 777.5 334.5 773.0 333.5 763.5 329.0 739.5 321.5 722.5 318.0Z" fill="#003a00" fill-rule="evenodd"/><path d="M725.5 318.5 702.0 315.5 666.5 315.5 642.0 319.5 625.5 324.0 611.0 330.0 593.5 339.5 584.0 346.0 568.5 359.5 559.5 369.0 547.0 385.0 545.0 389.5 538.0 400.0 531.0 415.0 523.0 436.5 518.0 455.0 513.0 487.0 512.0 503.5 512.0 534.0 513.0 550.0 515.0 566.0 521.0 594.0 526.0 610.5 533.5 628.5 543.5 648.5 563.0 676.5 570.5 672.0 584.0 684.5 600.5 696.0 619.5 705.0 636.0 710.0 657.0 713.0 675.0 713.0 694.5 710.5 707.5 707.5 729.5 700.0 750.5 690.0 766.5 680.5 784.0 668.0 799.5 655.0 819.0 635.5 832.5 619.5 847.5 598.5 858.0 581.0 868.0 561.0 876.0 541.0 883.0 517.5 888.0 487.5 888.0 453.5 885.0 435.0 881.5 422.0 871.5 399.0 854.0 382.5 833.0 366.0 812.5 352.5 800.0 345.5 777.5 334.5 773.0 333.5 763.5 329.0 739.5 321.5Z" fill="#003c00" fill-rule="evenodd"/><path d="M737.5 321.0 722.5 318.0 702.0 315.5 666.5 315.5 646.5 318.5 625.5 324.0 601.0 335.0 584.0 346.0 575.0 353.5 562.5 365.5 549.5 381.5 534.5 407.0 523.0 436.5 518.0 455.0 513.0 487.0 512.0 503.5 512.0 534.0 515.0 566.0 518.5 584.0 526.0 610.5 533.5 628.5 543.5 648.5 558.0 670.0 565.5 665.5 574.5 675.0 588.0 686.0 601.0 694.0 619.5 702.0 637.5 706.5 650.0 708.0 669.5 708.0 690.5 705.0 702.5 702.0 728.0 692.5 747.5 682.5 764.0 672.0 780.0 660.0 796.0 646.0 813.0 628.5 829.0 609.0 841.5 591.0 853.0 571.5 865.5 545.0 873.0 524.0 878.5 502.5 881.0 487.5 882.5 468.0 882.0 450.5 880.0 435.5 876.0 419.0 871.0 405.5 863.5 391.0 846.0 376.0 827.5 362.0 800.0 345.5 777.5 334.5 773.0 333.5 763.5 329.0Z" fill="#004000" fill-rule="evenodd"/><path d="M737.5 321.0 722.5 318.0 702.0 315.5 666.5 315.5 646.5 318.5 625.5 324.0 601.0 335.0 584.0 346.0 575.0 353.5 562.5 365.5 549.5 381.5 534.5 407.0 523.0 436.5 518.0 455.0 513.0 487.0 512.0 503.5 512.0 534.0 515.0 566.0 518.5 584.0 526.0 610.5 533.5 628.5 543.5 648.5 553.0 663.0 560.5 659.0 569.5 669.0 584.5 681.5 604.5 693.0 619.5 698.5 636.0 702.0 647.0 703.0 666.0 702.5 684.5 699.5 705.0 693.5 724.0 685.5 739.0 677.5 759.0 664.5 778.0 649.5 797.0 631.5 808.0 619.5 825.0 598.0 838.0 578.5 850.0 557.0 858.0 539.5 867.0 514.5 871.5 497.0 875.0 475.0 875.5 445.5 873.5 430.0 869.0 412.0 864.5 400.5 855.5 384.0 827.5 362.0 800.0 345.5 777.5 334.5 773.0 333.5 763.5 329.0Z" fill="#004200" fill-rule="evenodd"/><path d="M763.5 329.0 737.5 321.0 722.5 318.0 702.0 315.5 666.5 315.5 646.5 318.5 625.5 324.0 601.0 335.0 584.0 346.0 575.0 353.5 562.5 365.5 549.5 381.5 534.5 407.0 521.0 443.0 518.0 455.0 513.0 487.0 512.0 503.5 512.0 534.0 515.0 566.0 518.5 584.0 526.0 610.5 533.5 628.5 548.5 656.0 556.0 652.5 562.0 660.0 574.0 671.5 585.5 680.0 597.0 686.5 609.0 691.5 624.0 695.5 641.0 697.5 658.5 697.0 679.0 693.5 697.0 688.0 712.5 681.5 730.5 672.0 747.5 661.0 762.0 650.0 777.5 636.5 796.5 617.0 813.0 597.0 827.0 577.0 838.0 558.5 848.0 538.5 855.0 521.5 861.5 501.5 866.5 479.0 868.5 462.0 868.5 438.5 867.0 426.0 864.0 412.5 859.5 399.5 854.0 388.0 847.0 377.0 833.0 366.0 812.5 352.5 800.0 345.5 777.5 334.5 773.0 333.5Z" fill="#004600" fill-rule="evenodd"/><path d="M777.5 334.5 773.0 333.5 763.5 329.0 739.5 321.5 722.5 318.0 702.0 315.5 666.5 315.5 646.5 318.5 625.5 324.0 611.0 330.0 601.0 335.0 584.0 346.0 568.5 359.5 559.5 369.0 548.0 383.5 538.0 400.0 531.0 415.0 523.0 436.5 518.0 455.0 514.5 475.0 512.0 503.5 512.0 534.0 515.0 566.0 518.5 584.0 526.0 610.5 533.5 628.5 544.0 649.0 551.5 646.0 567.0 663.5 579.5 673.5 588.5 679.0 601.5 685.0 614.5 689.0 631.5 691.5 647.0 691.5 660.0 690.0 680.5 685.0 700.0 677.5 715.0 670.0 726.0 663.5 748.0 648.0 763.5 635.0 780.5 618.5 793.5 604.0 807.0 587.0 821.0 566.5 831.0 549.5 840.5 530.5 847.0 515.0 853.0 497.5 857.5 480.0 860.0 465.5 861.5 448.5 861.0 429.5 858.5 413.5 855.5 402.5 851.0 391.0 844.5 379.0 838.0 370.0 827.5 362.0 824.0 360.5 812.5 352.5Z" fill="#004800" fill-rule="evenodd"/><path d="M777.5 334.5 773.0 333.5 763.5 329.0 739.5 321.5 722.5 318.0 702.0 315.5 666.5 315.5 646.5 318.5 625.5 324.0 611.0 330.0 601.0 335.0 584.0 346.0 568.5 359.5 559.5 369.0 548.0 383.5 538.0 400.0 531.0 415.0 523.0 436.5 518.0 455.0 514.5 475.0 512.0 503.5 512.0 534.0 515.0 566.0 518.5 584.0 525.5 609.0 533.5 628.5 540.0 641.5 547.0 639.0 555.5 650.0 566.5 661.0 582.5 672.5 596.0 679.0 609.0 683.0 620.5 685.0 637.5 685.5 654.0 683.5 668.5 680.0 684.0 674.5 702.0 666.0 729.0 649.0 744.5 637.0 757.5 625.5 773.5 609.5 787.5 593.5 803.5 572.5 818.0 550.0 836.0 514.5 845.0 490.0 849.5 473.0 853.5 447.0 853.5 424.5 851.5 410.0 845.0 389.0 837.0 374.0 829.5 364.0 812.5 352.5Z" fill="#004c00" fill-rule="evenodd"/><path d="M812.5 352.5 777.5 334.5 773.0 333.5 763.5 329.0 739.5 321.5 722.5 318.0 702.0 315.5 666.5 315.5 646.5 318.5 625.5 324.0 611.0 330.0 601.0 335.0 584.0 346.0 562.5 365.5 547.0 385.0 545.0 389.5 538.0 400.0 531.0 415.0 521.0 443.0 518.0 455.0 513.0 487.0 512.0 503.5 512.0 534.0 515.0 566.0 518.5 584.0 525.5 609.0 536.5 634.0 542.5 631.5 552.5 645.0 564.0 656.5 577.0 666.0 587.5 671.5 598.5 675.5 613.5 678.5 630.5 679.0 640.5 678.0 658.5 674.0 671.5 669.5 689.0 661.5 703.0 653.5 720.0 642.0 734.0 631.0 762.5 604.0 777.5 587.0 792.5 567.5 804.0 550.5 815.5 531.0 825.5 511.0 833.5 491.5 839.0 474.5 843.0 457.5 845.5 439.0 845.5 417.0 842.0 397.0 837.0 383.0 829.5 369.5 823.0 361.0 818.5 356.5Z" fill="#004e00" fill-rule="evenodd"/><path d="M808.0 350.0 777.5 334.5 773.0 333.5 763.5 329.0 737.5 321.0 722.5 318.0 702.0 315.5 666.5 315.5 646.5 318.5 625.5 324.0 611.0 330.0 601.0 335.0 584.0 346.0 562.5 365.5 547.0 385.0 545.0 389.5 538.0 400.0 531.0 415.0 521.0 443.0 518.0 455.0 513.0 487.0 512.0 503.5 512.0 534.0 515.0 566.0 522.0 597.5 524.5 603.5 526.0 610.5 532.5 626.0 538.5 624.5 548.5 638.5 559.5 650.0 572.0 659.5 584.5 666.0 593.0 669.0 604.5 671.5 630.5 671.5 645.5 668.5 658.0 664.5 684.5 652.0 700.5 642.0 713.5 632.5 732.0 617.0 748.0 601.5 774.5 571.0 787.0 554.0 803.5 528.0 817.0 502.0 822.0 490.5 829.5 469.5 833.5 454.5 836.5 437.5 837.5 426.0 837.0 407.5 835.0 395.5 831.0 382.5 826.0 372.0 817.0 359.0Z" fill="#005200" fill-rule="evenodd"/><path d="M798.0 344.5 777.5 334.5 773.0 333.5 763.5 329.0 739.5 321.5 725.5 318.5 702.0 315.5 666.5 315.5 642.0 319.5 625.5 324.0 601.0 335.0 584.0 346.0 575.0 353.5 562.5 365.5 549.5 381.5 538.0 400.0 531.0 415.0 523.0 436.5 518.0 455.0 513.0 487.0 512.0 503.5 512.0 534.0 515.0 566.0 518.5 584.0 525.5 609.0 529.0 617.5 530.5 618.5 535.0 617.0 546.0 633.5 562.5 649.5 573.5 656.5 582.5 660.5 590.5 663.0 602.5 665.0 617.5 665.0 625.5 664.0 638.5 661.0 655.0 655.0 667.5 649.0 682.0 640.5 710.5 619.5 724.0 607.5 741.0 590.5 768.0 558.5 790.5 525.5 809.0 491.0 821.5 458.5 825.5 443.0 828.0 428.5 829.0 416.0 828.5 401.5 827.0 391.5 823.0 378.0 818.0 367.5 809.5 355.5Z" fill="#005400" fill-rule="evenodd"/><path d="M786.5 339.0 777.5 334.5 773.0 333.5 763.5 329.0 758.5 328.0 754.5 326.0 739.5 321.5 722.5 318.0 702.0 315.5 666.5 315.5 646.5 318.5 621.5 325.5 611.0 330.0 593.5 339.5 584.0 346.0 568.5 359.5 559.5 369.0 548.0 383.5 538.0 400.0 531.0 415.0 523.0 436.5 518.0 455.0 513.0 487.0 512.0 503.5 512.0 534.0 515.0 566.0 518.5 584.0 526.0 610.5 531.5 609.5 536.5 618.5 544.5 629.5 552.0 637.5 560.5 644.5 572.5 651.5 583.5 655.5 594.0 657.5 611.0 657.5 625.0 655.0 637.5 651.0 659.0 641.0 683.0 625.5 708.5 604.5 737.0 575.5 763.5 542.5 786.0 508.0 802.5 476.0 813.5 446.5 816.5 435.0 819.5 417.5 819.5 393.0 816.5 378.5 813.5 370.5 809.0 362.0 802.5 353.0 794.5 345.0Z" fill="#005800" fill-rule="evenodd"/><path d="M779.0 336.5 770.5 332.0 754.5 326.0 739.5 321.5 722.5 318.0 702.0 315.5 666.5 315.5 646.5 318.5 621.5 325.5 611.0 330.0 593.5 339.5 584.0 346.0 568.5 359.5 559.5 369.0 548.0 383.5 538.0 400.0 531.0 415.0 523.0 436.5 518.0 455.0 513.0 487.0 512.0 503.5 512.0 534.0 515.0 566.0 518.5 584.0 524.0 603.0 527.0 602.0 529.0 603.0 532.0 609.5 538.5 619.5 546.5 629.0 555.5 637.0 564.0 642.5 577.5 648.0 588.5 650.0 602.0 650.0 619.5 646.5 632.0 642.0 645.5 635.5 667.0 622.0 682.0 610.5 698.0 596.5 723.0 571.0 750.5 537.5 773.5 503.5 789.0 475.5 800.5 449.0 806.5 430.0 810.0 412.5 811.0 402.0 810.5 387.0 806.0 368.5 801.0 358.5 796.0 351.5 790.5 345.5Z" fill="#005a00" fill-rule="evenodd"/><path d="M770.0 333.5 756.0 327.0 743.0 323.5 739.5 321.5 722.5 318.0 702.0 315.5 666.5 315.5 642.0 319.5 619.0 326.5 601.0 335.0 598.0 337.5 593.5 339.5 584.0 346.0 568.5 359.5 559.5 369.0 548.0 383.5 538.0 400.0 531.0 415.0 523.0 436.5 518.0 455.0 513.0 487.0 512.0 503.5 512.0 534.0 515.0 566.0 521.5 595.0 525.5 594.5 530.5 605.0 539.0 617.5 553.0 631.0 557.5 634.0 571.0 640.0 581.0 642.0 595.0 642.0 614.5 637.5 633.5 629.0 655.5 615.0 684.5 591.0 715.0 559.5 742.0 526.0 764.0 493.5 775.0 474.5 785.0 454.5 796.0 425.5 800.5 406.0 801.5 397.5 801.5 383.0 800.0 373.5 796.5 362.5 792.0 354.0 787.5 348.0 780.5 341.0Z" fill="#005e00" fill-rule="evenodd"/><path d="M768.5 335.5 751.0 326.5 733.5 322.0 733.0 320.5 722.5 318.0 702.0 315.5 666.5 315.5 646.5 318.5 621.5 325.5 611.0 330.0 593.5 339.5 584.0 346.0 562.5 365.5 549.5 381.5 534.5 407.0 521.0 443.0 515.0 471.5 512.0 503.5 512.0 534.0 513.0 550.0 515.0 566.0 519.0 586.0 523.0 587.5 528.0 598.5 534.0 608.0 541.0 616.5 547.0 622.0 555.0 627.5 565.5 632.0 575.5 634.0 586.0 634.0 595.5 632.5 607.0 629.0 624.0 621.0 646.0 606.5 672.5 584.0 697.0 559.0 723.5 527.5 751.5 488.0 768.0 460.0 782.5 428.5 789.5 406.0 792.0 390.5 792.0 376.5 790.0 365.5 788.0 359.5 781.5 348.0Z" fill="#006000" fill-rule="evenodd"/><path d="M762.5 335.0 748.0 327.0 736.0 323.0 726.5 321.5 725.0 320.5 724.5 318.5 702.0 315.5 666.5 315.5 646.5 318.5 621.5 325.5 611.0 330.0 593.5 339.5 584.0 346.0 562.5 365.5 549.5 381.5 534.5 407.0 521.0 443.0 515.0 471.5 512.0 503.5 512.0 534.0 513.0 550.0 517.5 578.5 519.5 578.5 520.5 579.5 526.0 592.5 533.0 603.5 544.0 615.0 550.5 619.5 561.0 624.0 568.5 625.5 580.0 625.5 596.5 621.5 612.5 614.0 635.0 599.0 661.0 576.5 687.0 549.5 712.5 519.0 735.5 487.5 753.5 459.0 769.5 428.0 778.5 403.5 782.5 382.0 781.5 364.5 779.0 356.0 775.5 349.0 771.5 343.5Z" fill="#006400" fill-rule="evenodd"/><path d="M754.0 333.0 739.5 325.5 729.5 322.5 717.0 320.5 716.0 317.5 702.0 315.5 666.5 315.5 642.0 319.5 619.0 326.5 601.0 335.0 598.0 337.5 593.5 339.5 584.0 346.0 562.5 365.5 549.5 381.5 534.5 407.0 521.0 443.0 515.0 471.5 512.0 503.5 512.0 534.0 513.0 550.0 516.0 570.0 518.0 571.0 522.0 582.0 526.5 590.5 534.5 601.5 541.5 608.0 546.5 611.5 557.5 616.0 571.5 617.0 587.0 613.5 605.5 604.5 623.5 592.0 647.0 571.5 677.0 540.0 705.0 506.0 726.5 476.5 749.0 440.5 761.5 415.5 770.0 391.5 772.5 378.0 772.5 364.0 769.5 352.0 764.0 342.5Z" fill="#006600" fill-rule="evenodd"/><path d="M747.0 332.5 736.5 326.5 728.0 323.5 716.5 321.0 709.0 320.5 707.5 316.5 702.0 315.5 666.5 315.5 642.0 319.5 619.0 326.5 601.0 335.0 598.0 337.5 593.5 339.5 584.0 346.0 562.5 365.5 549.5 381.5 534.5 407.0 521.0 443.0 515.0 471.5 512.0 503.5 512.0 534.0 514.5 561.5 516.0 563.0 520.5 576.0 526.5 587.0 530.5 592.5 537.5 599.5 542.5 603.0 551.5 607.0 556.5 608.0 566.5 608.0 582.5 603.5 597.5 595.5 611.5 585.5 623.5 575.5 651.0 548.5 671.5 525.5 691.5 501.0 718.0 465.0 739.0 432.0 751.5 408.0 759.5 387.0 763.0 367.0 762.0 355.5 760.5 350.0 757.0 343.0 754.5 339.5Z" fill="#006a00" fill-rule="evenodd"/><path d="M739.0 331.5 731.5 327.0 722.0 323.5 710.0 321.0 700.5 320.5 698.5 315.5 666.5 315.5 642.0 319.5 619.0 326.5 601.0 335.0 598.0 337.5 593.5 339.5 575.0 353.5 562.5 365.5 548.0 383.5 538.0 400.0 531.0 415.0 524.0 433.5 518.0 455.0 513.0 487.0 512.0 503.5 512.0 534.0 513.5 553.0 517.0 564.5 522.5 576.5 527.5 584.0 534.0 591.0 540.5 595.5 547.0 598.0 559.5 599.0 573.0 595.5 584.0 590.0 592.5 584.5 609.5 571.0 627.5 554.0 655.5 523.5 681.0 492.5 706.0 459.0 725.0 430.5 735.5 412.5 747.0 388.0 752.5 367.5 752.5 353.5 748.5 342.0 745.0 337.0Z" fill="#006c00" fill-rule="evenodd"/><path d="M729.0 329.5 723.5 326.5 713.5 323.0 702.0 321.0 691.5 320.5 690.0 315.5 666.5 315.5 646.5 318.5 625.5 324.0 611.0 330.0 601.0 335.0 584.0 346.0 562.5 365.5 549.5 381.5 534.5 407.0 524.0 433.5 518.0 455.0 513.0 487.0 512.0 503.5 512.0 534.0 513.0 548.5 517.0 561.0 521.5 570.5 528.0 579.5 533.0 584.0 543.0 589.0 555.5 589.5 564.5 587.0 574.0 582.5 588.0 573.0 607.5 556.0 631.5 531.0 653.5 505.5 679.0 473.5 700.0 445.0 718.0 418.0 729.5 398.0 737.5 380.5 742.5 362.0 742.5 350.0 741.0 344.0 738.5 339.0 735.5 335.0Z" fill="#007000" fill-rule="evenodd"/><path d="M722.5 330.5 717.0 327.0 705.5 323.0 695.5 321.5 683.0 321.5 680.5 315.5 666.5 315.5 642.0 319.5 625.5 324.0 601.0 335.0 584.0 346.0 562.5 365.5 549.5 381.5 534.5 407.0 524.0 433.5 518.0 455.0 513.0 487.0 512.0 503.5 512.0 534.0 513.0 545.0 516.0 554.5 520.0 563.0 524.0 569.0 530.5 575.5 540.5 580.0 550.5 580.0 557.5 578.0 566.0 574.0 578.5 565.5 593.0 553.0 614.5 531.0 633.0 510.0 665.5 470.0 687.0 441.5 708.0 411.0 718.5 393.5 727.5 375.0 732.0 360.0 732.5 347.5 729.0 337.5Z" fill="#007200" fill-rule="evenodd"/><path d="M713.5 330.0 705.0 325.5 695.5 323.0 685.5 322.0 674.0 322.5 671.0 315.5 658.0 316.5 634.0 321.5 625.5 324.0 611.0 330.0 593.5 339.5 575.0 353.5 562.5 365.5 548.0 383.5 538.0 400.0 531.0 415.0 521.0 443.0 515.0 471.5 512.0 503.5 512.5 539.0 516.0 549.5 520.0 557.5 527.5 566.0 535.5 570.0 544.5 570.5 550.5 569.0 559.0 565.0 570.0 557.5 579.5 549.5 599.5 529.5 621.5 504.5 650.5 469.0 691.0 415.0 706.0 392.0 715.0 375.5 720.5 361.5 722.5 351.5 722.5 346.5 721.5 341.0 719.5 336.5Z" fill="#007600" fill-rule="evenodd"/><path d="M704.5 330.0 699.5 327.0 689.5 324.0 678.5 323.0 665.0 324.0 661.5 316.5 646.5 318.5 625.5 324.0 601.0 335.0 584.0 346.0 568.5 359.5 555.0 374.5 548.0 383.5 538.0 400.0 531.0 415.0 521.0 443.0 515.0 471.5 512.0 503.5 512.0 531.5 517.5 547.0 525.0 556.5 533.5 560.5 543.0 560.0 555.0 554.5 564.5 547.5 572.0 541.0 592.0 520.5 642.0 460.5 687.0 400.5 698.0 383.5 707.0 366.5 711.5 353.0 712.0 342.5 709.5 335.5Z" fill="#007800" fill-rule="evenodd"/><path d="M695.5 330.5 686.0 326.0 677.0 324.5 666.0 324.5 656.0 326.0 652.0 318.0 642.0 319.5 625.5 324.0 601.0 335.0 584.0 346.0 568.5 359.5 555.0 374.5 548.0 383.5 538.0 400.0 531.0 415.0 521.0 443.0 515.0 471.5 512.0 503.5 512.0 525.0 515.0 535.0 517.5 540.0 524.0 547.5 531.0 550.5 538.5 550.0 551.0 544.0 560.0 537.0 575.0 522.5 589.0 507.0 638.5 446.5 679.5 392.0 691.0 374.0 697.0 362.5 701.0 351.0 701.5 340.5 699.5 335.0Z" fill="#007c00" fill-rule="evenodd"/><path d="M685.0 330.5 678.5 327.5 669.5 326.0 656.5 326.5 646.5 328.5 641.5 320.0 625.5 324.0 601.0 335.0 584.0 346.0 568.5 359.5 555.0 374.5 547.0 385.0 534.5 407.0 524.0 433.5 518.0 455.0 513.0 487.0 512.0 517.5 515.0 527.5 521.0 536.5 526.0 539.5 533.5 540.0 542.5 536.5 553.5 528.5 566.0 516.5 580.0 501.0 625.0 446.0 664.0 395.5 683.5 366.0 688.5 355.5 691.0 346.5 690.5 337.5 689.0 334.5Z" fill="#007e00" fill-rule="evenodd"/><path d="M675.0 331.5 669.0 329.0 663.5 328.0 650.0 328.5 636.5 331.5 631.0 323.0 621.5 325.5 601.0 335.0 584.0 346.0 562.5 365.5 549.5 381.5 538.0 400.0 531.0 415.0 523.0 436.5 518.0 455.0 513.0 487.0 512.0 507.5 514.5 517.5 518.0 524.0 521.5 527.5 526.5 529.5 535.0 528.0 543.5 523.0 553.5 514.5 565.0 502.5 585.5 478.5 637.5 413.5 663.0 379.5 677.0 356.0 680.0 347.5 680.5 340.0 678.5 335.0Z" fill="#008200" fill-rule="evenodd"/><path d="M665.5 333.5 657.0 330.5 646.0 330.5 639.5 331.5 626.0 335.5 620.0 326.5 601.0 335.0 584.0 346.0 568.5 359.5 555.0 374.5 547.0 385.0 534.5 407.0 524.0 433.5 518.0 455.0 514.5 475.0 512.5 497.5 515.5 510.0 521.0 517.0 527.5 518.5 536.5 515.0 544.0 509.5 559.0 494.5 581.0 468.5 629.0 408.5 655.0 374.0 667.0 353.5 669.5 345.5 669.5 340.0 668.5 337.0Z" fill="#008400" fill-rule="evenodd"/><path d="M656.0 336.5 649.5 333.5 637.5 333.5 626.5 336.0 615.0 340.5 608.0 331.5 593.5 339.5 584.0 346.0 568.5 359.5 555.0 374.5 547.0 385.0 534.5 407.0 521.0 443.0 518.0 455.0 513.5 483.0 515.0 496.5 517.5 502.5 521.0 506.0 526.5 507.0 534.0 504.0 542.0 498.0 553.0 487.0 571.0 466.0 638.5 381.0 654.0 357.5 658.5 345.0 658.0 339.5Z" fill="#008800" fill-rule="evenodd"/><path d="M644.5 339.0 640.0 337.0 629.5 337.0 616.5 340.5 602.5 346.5 595.5 338.5 584.0 346.0 575.0 353.5 562.5 365.5 547.0 385.0 534.5 407.0 521.0 443.0 515.5 470.5 516.0 484.5 518.0 490.5 521.0 494.0 526.5 495.0 532.5 492.5 538.0 488.5 558.5 467.0 603.5 411.5 628.5 379.5 642.5 358.5 647.0 346.5 647.0 343.5Z" fill="#008a00" fill-rule="evenodd"/><path d="M632.5 342.5 628.5 341.0 623.0 341.0 614.0 343.0 605.0 346.5 589.0 355.5 581.0 349.0 568.5 359.5 557.0 372.0 548.0 383.5 538.0 400.0 531.0 415.0 524.5 432.5 525.5 434.5 521.5 445.0 518.0 463.0 518.5 475.0 521.5 481.0 523.5 482.0 528.0 482.0 537.5 476.0 553.5 459.5 583.5 423.0 615.5 382.5 628.5 364.0 633.0 355.5 635.0 349.0 634.5 345.0Z" fill="#008e00" fill-rule="evenodd"/><path d="M620.0 347.5 617.5 346.5 613.0 346.5 600.0 350.5 582.0 361.0 569.5 371.0 561.5 367.0 547.0 385.0 545.0 389.5 538.0 400.0 534.0 408.5 536.5 412.5 526.5 433.0 522.0 449.5 521.5 462.0 522.5 465.5 524.5 468.0 528.5 468.5 533.0 466.5 544.5 456.5 564.5 433.5 608.0 378.5 618.0 363.5 622.0 354.0 622.0 350.0Z" fill="#009000" fill-rule="evenodd"/><path d="M606.5 354.5 600.0 354.0 594.0 356.0 584.5 361.0 568.5 373.0 553.5 388.5 538.5 410.0 530.0 428.0 527.0 438.0 526.0 445.0 526.5 450.0 528.0 452.5 532.0 453.0 542.0 446.0 570.5 413.5 591.0 387.5 603.5 369.5 608.0 359.0 608.0 356.5Z" fill="#009400" fill-rule="evenodd"/><path d="M590.5 365.0 585.0 365.0 573.5 371.5 564.5 379.0 552.5 392.0 544.0 404.0 537.0 417.5 534.0 427.0 534.0 433.0 535.5 434.5 539.5 433.5 547.5 427.0 572.0 398.5 588.0 376.0 591.0 369.5Z" fill="#009600" fill-rule="evenodd"/></g><g shape-rendering="crispEdges" style="mix-blend-mode:plus-lighter"><polygon points="657.0,495.0 607.0,437.0 676.0,464.0" fill="url(#hg0)"/><polygon points="607.0,437.0 577.0,402.2 687.4,445.4" fill="url(#hg1)"/><polygon points="607.0,437.0 687.4,445.4 676.0,464.0" fill="url(#hg2)"/><polygon points="657.0,495.0 676.0,464.0 697.0,491.0" fill="url(#hg3)"/><polygon points="676.0,464.0 687.4,445.4 721.0,488.6" fill="url(#hg4)"/><polygon points="676.0,464.0 721.0,488.6 697.0,491.0" fill="url(#hg5)"/><polygon points="657.0,495.0 697.0,491.0 654.0,537.0" fill="url(#hg6)"/><polygon points="697.0,491.0 721.0,488.6 652.2,562.2" fill="url(#hg7)"/><polygon points="697.0,491.0 652.2,562.2 654.0,537.0" fill="url(#hg8)"/><polygon points="657.0,495.0 654.0,537.0 635.0,513.0" fill="url(#hg9)"/><polygon points="654.0,537.0 652.2,562.2 621.8,523.8" fill="url(#hg10)"/><polygon points="654.0,537.0 621.8,523.8 635.0,513.0" fill="url(#hg11)"/><polygon points="657.0,495.0 635.0,513.0 588.0,464.0" fill="url(#hg12)"/><polygon points="635.0,513.0 621.8,523.8 546.6,445.4" fill="url(#hg13)"/><polygon points="635.0,513.0 546.6,445.4 588.0,464.0" fill="url(#hg14)"/><polygon points="657.0,495.0 588.0,464.0 607.0,437.0" fill="url(#hg15)"/><polygon points="588.0,464.0 546.6,445.4 577.0,402.2" fill="url(#hg16)"/><polygon points="588.0,464.0 577.0,402.2 607.0,437.0" fill="url(#hg17)"/></g></g><path d="M731.5 296.2 L730.0 292.3 L728.6 288.4 L727.4 284.5 L726.2 280.5 L725.1 276.4 L724.1 272.4 L723.2 268.2 L722.4 264.1 L721.7 259.9 L721.1 255.7 L720.7 251.4 L720.3 247.2 L720.1 242.9 L720.0 238.6 L720.1 234.3 L720.3 230.1 L720.6 225.8 L721.0 221.5 L721.6 217.2 L722.3 213.0 L723.1 208.8 L724.1 204.6 L725.2 200.4 L726.5 196.3 L727.8 192.2 L729.3 188.1 L730.9 184.1 L732.7 180.2 L734.6 176.3 L736.6 172.4 L738.7 168.6 L740.9 164.9 L743.2 161.3 L745.7 157.7 L748.2 154.2 L750.8 150.8 L753.6 147.5 L756.4 144.2 L759.3 141.0 L762.3 137.9 L765.4 134.9 L768.6 132.0 L771.8 129.1 L775.1 126.4 L778.4 123.7 L781.9 121.1 L785.3 118.6 L788.9 116.2 L792.4 113.8 L796.0 111.6 L799.7 109.4 L803.4 107.3 L807.1 105.3 L810.9 103.4 L814.7 101.6 L818.5 99.8 L822.3 98.1 L826.2 96.5 L830.0 95.0 L833.9 93.5 L837.8 92.2 L841.8 90.9 L845.7 89.6 L849.6 88.5 L853.6 87.4 L857.5 86.3 L861.5 85.4 L865.4 84.5 L869.4 83.7 L873.3 82.9 L877.3 82.2 L881.2 81.6 L885.2 81.0 L889.1 80.5 L893.0 80.1 L897.0 79.7 L900.9 79.4 L904.8 79.2 L908.7 79.0 L912.6 78.9 L916.5 78.8 L920.4 78.8 L924.3 78.8 L928.1 78.9 L932.0 79.1 L935.8 79.4 L939.6 79.6 L943.4 80.0 L947.2 80.4 L950.9 80.9 L954.7 81.4 L958.4 81.9 L962.1 82.6 L965.8 83.3 L969.5 84.0 L973.2 84.8 L976.8 85.6 L980.4 86.5 L984.0 87.5 L987.6 88.5 L991.1 89.5 L994.6 90.6 L998.1 91.8 L1001.6 93.0 L1005.1 94.2 L1008.5 95.5 L1011.9 96.9 L1015.3 98.2 L1018.6 99.7 L1021.9 101.1 L1025.2 102.7 L1028.5 104.2 L1031.8 105.8 L1035.0 107.5 L1038.2 109.2 L1041.3 110.9 L1044.5 112.7 L1047.6 114.5 L1050.7 116.3 L1053.7 118.2 L1056.7 120.1 L1059.7 122.1 L1062.7 124.1 L1065.6 126.2 L1068.5 128.3 L1071.4 130.4 L1074.3 132.5 L1077.1 134.7 L1079.9 137.0 L1082.7 139.2 L1085.4 141.6 L1088.1 143.9 L1090.7 146.3 L1093.4 148.7 L1096.0 151.2 L1098.5 153.7 L1101.1 156.2 L1103.6 158.8 L1106.0 161.4 L1108.5 164.0 L1110.8 166.7 L1113.2 169.4 L1115.5 172.2 L1117.8 175.0 L1120.0 177.8 L1122.2 180.7 L1124.4 183.6 L1126.5 186.5 L1128.6 189.5 L1130.6 192.5 L1132.6 195.5 L1134.6 198.6 L1136.5 201.7 L1138.3 204.8 L1140.1 208.0 L1141.9 211.2 L1143.6 214.4 L1145.3 217.7 L1147.0 221.0 L1148.6 224.3 L1150.1 227.6 L1151.6 231.0 L1153.0 234.4 L1154.4 237.8 L1155.8 241.3 L1157.1 244.8 L1158.4 248.3 L1159.6 251.9 L1160.7 255.4 L1161.9 259.0 L1162.9 262.6 L1163.9 266.3 L1164.9 269.9 L1165.8 273.6 L1166.7 277.3 L1167.5 281.1 L1168.3 284.8 L1169.0 288.6 L1169.7 292.4 L1170.3 296.2 L1170.8 300.0 L1171.3 303.9 L1171.8 307.8 L1172.2 311.7 L1172.5 315.6 L1172.8 319.5 L1173.0 323.5 L1173.2 327.4 L1173.3 331.4 L1173.4 335.4 L1173.3 339.4 L1173.3 343.5 L1173.1 347.5 L1172.9 351.6 L1172.7 355.6 L1172.3 359.7 L1171.9 363.8 L1171.4 367.8 L1170.9 371.9 L1170.3 376.0 L1169.6 380.1 L1168.8 384.2 L1167.9 388.3 L1167.0 392.4 L1166.0 396.5 L1164.9 400.5 L1163.7 404.6 L1162.4 408.6 L1161.0 412.7 L1159.6 416.6 L1158.0 420.6 L1156.4 424.6 L1154.6 428.5 L1152.8 432.4 L1150.9 436.2 L1148.9 440.0 L1146.7 443.7 L1144.5 447.4 L1142.2 451.1 L1139.8 454.7 L1137.3 458.2 L1134.7 461.6 L1132.0 465.0 L1129.2 468.3 L1126.3 471.5 L1123.3 474.7 L1120.2 477.7 L1117.1 480.7 L1113.8 483.5 L1110.5 486.3 L1107.0 489.0 L1103.5 491.5 L1100.0 494.0 L1096.3 496.3 L1092.6 498.5 L1088.8 500.6 L1085.0 502.6 L1081.1 504.5 L1077.1 506.2 L1073.1 507.8 L1069.1 509.3 L1065.0 510.6 L1060.8 511.9 L1056.7 512.9 L1052.5 513.9 L1048.3 514.8 L1044.0 515.5 L1039.8 516.1 L1035.5 516.5 L1031.3 516.9 L1027.0 517.1 L1022.7 517.2 L1018.5 517.1 L1014.3 517.0 L1010.0 516.8 L1005.9 516.4 L1001.7 516.0 L997.5 515.4 L993.4 514.7 L989.4 514.0 L985.3 513.2 L981.3 512.2 L977.3 511.2 L973.4 510.2 L969.6 509.0 L965.7 507.8 L962.0 506.5 L958.2 505.2 L954.6 503.8 L950.9 502.3 L947.4 500.8 L943.9 499.3 L940.4 497.7 L937.0 496.1 L933.6 494.4 L930.3 492.8 L927.0 491.1 L923.8 489.3 L920.6 487.6 L917.5 485.8 L914.4 484.1 L911.4 482.3 L908.4 480.5 L905.5 478.7 L902.5 476.9 L899.7 475.0 L896.8 473.2 L894.0 471.4 L891.3 469.6 L888.5 467.7 L885.8 465.9 L883.1 464.0 L880.5 462.2 L877.9 460.4 L875.3 458.5 L872.7 456.7 L870.1 454.8 L867.6 452.9 L865.1 451.1 L862.6 449.2 L860.1 447.3 L857.7 445.5 L855.2 443.6 L852.8 441.7 L850.4 439.8 L848.0 437.9 L845.7 435.9 L843.3 434.0 L840.9 432.0 L838.6 430.1 L836.3 428.1 L834.0 426.1 L831.7 424.1 L829.4 422.1 L827.1 420.1 L824.8 418.0 L822.5 416.0 L820.3 413.9 L818.0 411.8 L815.7 409.7 L813.5 407.5 L811.3 405.3 L809.0 403.2 L806.8 401.0 L804.5 398.7 L802.3 396.5 L800.1 394.2 L797.8 391.9 L795.6 389.5 L793.4 387.2 L791.1 384.8 L788.9 382.4 L786.7 379.9 L784.4 377.4 L782.2 374.9 L779.9 372.3 L777.7 369.7 L775.5 367.1 L773.3 364.4 L771.0 361.7 L768.8 358.9 L766.6 356.1 L764.4 353.2 L762.2 350.3 L760.1 347.4 L757.9 344.3 L755.8 341.3 L753.7 338.1 L751.6 335.0 L749.5 331.7 L747.5 328.4 L745.5 325.1 L743.6 321.7 L741.7 318.2 L739.8 314.7 L738.0 311.1 L736.3 307.5 L734.6 303.8 L733.0 300.0Z" fill="#220000"/><g clip-path="url(#clr)"><g filter="url(#bl)"><path d="M842.0 86.5 822.5 93.5 808.5 100.0 793.5 108.0 773.5 122.0 752.0 142.5 744.5 151.5 735.0 166.0 728.5 179.0 721.5 198.5 718.0 216.5 717.0 229.5 717.5 256.5 720.0 272.0 725.0 290.5 730.5 305.0 740.0 324.0 758.5 353.0 787.0 387.0 816.0 416.0 843.5 440.0 852.5 447.0 865.5 452.5 887.5 459.0 904.5 462.0 915.0 463.0 948.0 462.5 972.5 458.5 991.0 453.5 1008.5 447.0 1027.5 438.0 1049.5 424.5 1071.0 407.5 1091.0 387.0 1105.5 368.0 1115.0 352.5 1124.0 334.0 1131.0 314.5 1135.5 296.0 1138.0 276.5 1138.0 254.0 1137.0 244.0 1133.0 224.0 1125.0 201.5 1115.0 183.0 1102.5 166.5 1109.5 159.0 1096.0 145.0 1081.5 132.5 1068.0 122.5 1047.0 109.0 1019.0 95.0 982.5 83.0 966.0 79.5 944.5 76.5 900.5 76.0 876.5 78.5Z" fill="#260000" fill-rule="evenodd"/><path d="M842.0 86.5 822.5 93.5 808.5 100.0 793.5 108.0 773.5 122.0 752.0 142.5 744.5 151.5 735.0 166.0 728.5 179.0 721.5 198.5 718.0 216.5 717.0 229.5 717.5 256.5 720.0 272.0 725.0 290.5 730.5 305.0 740.0 324.0 758.5 353.0 787.0 387.0 816.0 416.0 843.5 440.0 860.0 448.0 877.0 453.5 900.0 458.0 919.5 459.5 938.5 459.0 958.5 456.5 983.5 450.5 1005.5 442.5 1025.0 433.0 1044.5 421.0 1061.0 408.5 1081.5 389.0 1091.0 378.0 1100.0 366.0 1111.5 347.5 1120.0 330.0 1128.5 305.5 1131.5 292.5 1134.0 274.5 1134.5 256.5 1132.5 235.5 1128.0 216.0 1121.5 198.5 1110.0 177.5 1096.5 160.5 1103.0 152.0 1079.0 130.5 1047.0 109.0 1019.0 95.0 982.5 83.0 966.0 79.5 944.5 76.5 900.5 76.0 876.5 78.5Z" fill="#2a0000" fill-rule="evenodd"/><path d="M876.5 78.5 866.0 80.5 834.5 89.0 812.5 98.0 793.5 108.0 778.0 118.5 767.0 127.5 752.0 142.5 744.5 151.5 735.0 166.0 728.5 179.0 720.0 205.0 717.5 221.0 717.0 248.0 718.0 260.5 721.0 276.5 725.0 290.5 730.5 305.0 744.0 331.0 758.5 353.0 787.0 387.0 816.0 416.0 839.0 436.0 852.5 442.5 868.0 448.0 879.5 451.0 897.0 454.0 907.5 455.0 931.5 455.0 946.5 453.5 963.0 450.5 980.0 446.0 1005.0 436.5 1028.0 424.5 1042.5 415.0 1055.0 405.5 1068.0 394.0 1080.5 381.0 1095.5 362.0 1106.0 345.5 1115.5 326.5 1123.0 306.0 1126.5 292.5 1130.0 269.0 1130.0 244.5 1126.0 219.5 1120.5 202.0 1113.5 186.5 1103.0 169.5 1090.0 154.0 1096.5 145.5 1077.0 129.0 1047.0 109.0 1025.5 98.0 1008.5 91.0 982.5 83.0 966.0 79.5 937.0 76.0 900.5 76.0Z" fill="#2c0000" fill-rule="evenodd"/><path d="M892.5 76.5 866.0 80.5 842.0 86.5 812.5 98.0 793.5 108.0 778.0 118.5 767.0 127.5 752.0 142.5 743.0 153.5 735.0 166.0 728.5 179.0 721.5 198.5 717.5 221.0 717.5 256.5 721.0 276.5 726.0 293.5 730.5 305.0 740.0 324.0 748.0 337.5 758.5 353.0 787.0 387.0 816.0 416.0 833.5 431.0 850.5 439.0 863.5 443.5 882.0 448.0 901.5 450.5 928.0 450.5 938.5 449.5 956.5 446.5 977.0 441.0 994.5 434.5 1014.5 425.0 1033.5 413.5 1051.5 400.0 1059.0 393.5 1078.5 373.5 1092.0 356.0 1102.0 340.0 1111.0 322.0 1118.0 303.5 1122.5 286.5 1125.5 266.5 1126.0 245.0 1125.0 233.5 1120.5 211.0 1113.5 191.5 1101.0 169.0 1091.0 156.0 1083.0 147.5 1089.0 139.0 1068.0 122.5 1047.0 109.0 1025.5 98.0 1008.5 91.0 982.5 83.0 966.0 79.5 944.5 76.5Z" fill="#300000" fill-rule="evenodd"/><path d="M892.5 76.5 866.0 80.5 842.0 86.5 812.5 98.0 793.5 108.0 778.0 118.5 767.0 127.5 752.0 142.5 743.0 153.5 735.0 166.0 728.5 179.0 721.5 198.5 717.5 221.0 717.5 256.5 721.0 276.5 726.0 293.5 730.5 305.0 740.0 324.0 748.0 337.5 758.5 353.0 778.0 377.0 816.0 416.0 826.0 424.5 839.5 431.5 866.5 441.0 881.0 444.0 899.0 446.0 927.5 445.5 953.0 441.5 973.0 436.0 996.0 427.0 1010.0 420.0 1023.5 412.0 1040.0 400.5 1056.0 387.0 1068.5 374.5 1081.5 359.0 1094.5 340.0 1106.0 318.0 1110.5 307.0 1115.5 291.5 1119.5 273.0 1121.5 252.5 1121.0 234.5 1117.0 210.5 1109.0 187.5 1101.5 173.0 1093.5 161.0 1084.5 150.0 1076.0 141.5 1082.0 133.0 1068.0 122.5 1047.0 109.0 1025.5 98.0 1008.5 91.0 982.5 83.0 966.0 79.5 944.5 76.5Z" fill="#320000" fill-rule="evenodd"/><path d="M937.0 76.0 892.5 76.5 866.0 80.5 842.0 86.5 822.5 93.5 793.5 108.0 778.0 118.5 767.0 127.5 752.0 142.5 743.0 153.5 735.0 166.0 728.5 179.0 721.5 198.5 718.5 213.0 717.0 229.5 717.0 248.0 718.5 264.0 722.5 282.5 730.5 305.0 740.0 324.0 758.5 353.0 787.0 387.0 816.0 416.0 825.0 421.5 843.0 430.0 856.0 434.5 875.5 439.0 892.5 441.0 917.0 441.0 935.0 439.0 948.0 436.5 961.5 433.0 988.5 423.0 1006.5 414.0 1026.5 401.5 1044.0 388.0 1060.0 373.0 1072.0 359.5 1085.0 342.0 1093.5 328.0 1103.0 308.5 1110.5 287.0 1114.5 269.0 1116.5 251.0 1116.5 234.5 1115.0 220.0 1111.5 203.5 1104.5 184.0 1095.5 167.0 1083.0 150.0 1069.0 136.0 1074.0 127.0 1047.0 109.0 1025.5 98.0 1008.5 91.0 980.5 82.5 963.0 79.0Z" fill="#360000" fill-rule="evenodd"/><path d="M982.5 83.0 966.0 79.5 944.5 76.5 892.5 76.5 866.0 80.5 842.0 86.5 822.5 93.5 793.5 108.0 778.0 118.5 767.0 127.5 752.0 142.5 743.0 153.5 735.0 166.0 728.5 179.0 721.5 198.5 718.5 213.0 717.0 229.5 717.0 248.0 718.0 260.5 721.0 276.5 725.0 290.5 730.5 305.0 740.0 324.0 748.0 337.5 758.5 353.0 778.0 377.0 809.0 409.0 829.5 421.0 848.5 428.5 866.0 433.0 890.0 436.0 909.0 436.0 928.5 434.0 946.0 430.5 967.5 424.0 982.5 418.0 1011.5 402.5 1029.5 390.0 1045.5 376.5 1062.5 359.0 1076.0 342.0 1087.5 324.0 1097.0 305.0 1104.5 284.5 1108.5 268.5 1111.0 251.0 1111.5 232.0 1110.0 216.0 1106.5 199.5 1101.5 184.5 1093.5 168.0 1079.5 148.0 1061.5 130.0 1066.5 121.5 1047.0 109.0 1019.0 95.0Z" fill="#380000" fill-rule="evenodd"/><path d="M1019.0 95.0 996.5 87.0 980.5 82.5 944.5 76.5 900.5 76.0 876.5 78.5 842.0 86.5 822.5 93.5 793.5 108.0 778.0 118.5 767.0 127.5 752.0 142.5 743.0 153.5 735.0 166.0 728.5 179.0 721.5 198.5 718.5 213.0 717.0 229.5 717.0 248.0 718.0 260.5 721.0 276.5 725.0 290.5 730.5 305.0 740.0 324.0 748.0 337.5 758.5 353.0 778.0 377.0 787.0 387.0 804.5 403.5 818.0 412.0 835.0 420.0 850.0 425.0 869.0 429.0 883.5 430.5 904.5 430.5 926.0 428.0 946.0 423.5 963.0 418.0 981.0 410.5 999.0 401.0 1017.5 389.0 1038.0 372.5 1054.5 356.0 1071.0 335.5 1081.0 320.0 1091.0 300.5 1095.5 289.5 1102.0 268.0 1105.0 251.0 1106.0 239.5 1105.5 218.5 1102.5 200.0 1095.5 178.5 1086.5 161.0 1072.0 141.5 1061.0 130.5 1054.0 125.0 1058.0 116.0 1047.0 109.0Z" fill="#3c0000" fill-rule="evenodd"/><path d="M1019.0 95.0 996.5 87.0 980.5 82.5 944.5 76.5 900.5 76.0 876.5 78.5 842.0 86.5 822.5 93.5 793.5 108.0 778.0 118.5 767.0 127.5 752.0 142.5 743.0 153.5 735.0 166.0 728.5 179.0 721.5 198.5 718.5 213.0 717.0 229.5 717.0 248.0 718.0 260.5 721.0 276.5 725.0 290.5 730.5 305.0 740.0 324.0 748.0 337.5 758.5 353.0 778.0 377.0 791.0 390.5 799.0 397.0 815.5 407.5 828.0 413.5 842.0 418.5 859.0 422.5 874.0 424.5 894.5 425.0 912.0 423.5 929.0 420.5 946.0 416.0 964.0 409.5 987.0 398.5 999.0 391.5 1019.0 377.5 1031.5 367.0 1050.0 348.5 1061.5 334.5 1072.5 318.5 1081.0 303.5 1090.0 283.0 1094.5 269.0 1098.0 254.0 1100.0 238.5 1100.0 215.0 1098.0 200.5 1094.5 186.5 1090.5 175.5 1079.5 154.5 1064.5 135.5 1046.5 119.5 1050.0 111.0Z" fill="#3e0000" fill-rule="evenodd"/><path d="M1019.0 95.0 1014.5 94.0 1008.5 91.0 982.5 83.0 963.0 79.0 937.0 76.0 900.5 76.0 876.5 78.5 842.0 86.5 822.5 93.5 808.5 100.0 793.5 108.0 776.0 120.0 767.0 127.5 752.0 142.5 743.0 153.5 735.0 166.0 728.5 179.0 721.5 198.5 718.5 213.0 717.0 229.5 718.0 260.5 721.0 276.5 726.0 293.5 730.5 305.0 740.0 324.0 758.5 353.0 784.0 382.0 798.0 393.5 811.5 402.0 823.0 407.5 840.0 413.5 859.0 417.5 875.5 419.0 889.0 419.0 909.5 417.0 931.0 412.5 948.5 407.0 964.5 400.5 980.5 392.5 994.0 384.5 1013.0 371.0 1032.0 354.5 1044.0 342.0 1055.5 328.0 1066.5 312.0 1074.0 299.0 1083.5 278.0 1088.5 263.0 1092.5 245.0 1094.0 233.0 1094.0 209.5 1092.5 198.0 1088.5 181.5 1080.0 161.0 1072.5 148.5 1060.0 133.0 1049.5 123.0 1039.0 115.0 1042.0 106.5Z" fill="#420000" fill-rule="evenodd"/><path d="M1033.5 102.0 1019.0 95.0 996.5 87.0 980.5 82.5 963.0 79.0 937.0 76.0 900.5 76.0 876.5 78.5 842.0 86.5 822.5 93.5 808.5 100.0 793.5 108.0 776.0 120.0 767.0 127.5 752.0 142.5 743.0 153.5 735.0 166.0 728.5 179.0 721.5 198.5 718.5 213.0 717.0 229.5 718.0 260.5 721.0 276.5 726.0 293.5 730.5 305.0 740.0 324.0 758.5 353.0 761.5 356.0 763.0 355.5 773.0 368.5 785.5 381.0 799.5 391.5 816.0 400.5 832.0 406.5 843.5 409.5 865.0 412.5 887.0 412.5 907.5 410.0 927.0 405.5 941.0 401.0 957.0 394.5 974.0 386.0 989.0 377.0 1004.5 366.0 1019.5 353.5 1036.5 336.5 1049.0 321.5 1058.5 308.0 1066.0 295.5 1075.0 277.0 1081.5 259.0 1086.0 240.0 1088.0 222.0 1088.0 208.5 1087.0 197.5 1084.0 182.5 1079.0 167.5 1072.5 154.0 1065.5 143.0 1058.0 133.5 1046.5 122.0 1031.0 110.0Z" fill="#440000" fill-rule="evenodd"/><path d="M1025.0 98.0 1008.5 91.0 982.5 83.0 966.0 79.5 944.5 76.5 900.5 76.0 876.5 78.5 842.0 86.5 822.5 93.5 808.5 100.0 793.5 108.0 776.0 120.0 767.0 127.5 752.0 142.5 743.0 153.5 735.0 166.0 728.5 179.0 721.5 198.5 718.5 213.0 717.0 229.5 718.0 260.5 721.0 276.5 726.0 293.5 730.5 305.0 740.0 324.0 755.5 348.5 756.5 349.0 759.0 348.0 769.5 362.5 784.0 377.0 795.5 385.5 812.0 394.5 826.5 400.0 838.0 403.0 859.0 406.0 880.0 406.0 908.0 402.0 925.0 397.5 944.0 390.5 964.0 381.0 977.0 373.5 990.5 364.5 1014.5 345.0 1032.5 326.5 1043.5 313.0 1053.5 298.5 1060.5 286.5 1068.5 270.0 1075.0 252.0 1078.0 240.5 1081.0 221.5 1081.5 205.0 1080.0 189.5 1077.0 175.5 1068.0 153.0 1060.0 140.0 1052.5 130.5 1037.5 116.0 1023.0 106.0Z" fill="#480000" fill-rule="evenodd"/><path d="M1016.5 94.5 1008.5 91.0 982.5 83.0 966.0 79.5 944.5 76.5 900.5 76.0 876.5 78.5 842.0 86.5 822.5 93.5 808.5 100.0 793.5 108.0 776.0 120.0 767.0 127.5 752.0 142.5 743.0 153.5 735.0 166.0 728.5 179.0 721.5 198.5 717.5 221.0 717.5 256.5 720.0 272.0 725.0 290.5 730.5 305.0 740.0 324.0 751.0 341.5 755.5 341.0 765.0 355.0 780.5 371.0 795.0 381.5 809.5 389.0 831.0 396.0 850.0 399.0 867.5 399.5 881.5 398.5 899.5 395.5 915.0 391.5 936.0 384.0 955.0 375.0 969.0 367.0 997.5 346.5 1012.0 333.5 1027.5 317.0 1040.0 301.0 1053.5 279.5 1064.0 257.0 1068.0 245.5 1072.0 229.5 1074.0 216.0 1074.5 197.0 1073.0 183.0 1070.5 171.5 1065.0 156.0 1060.0 146.0 1048.5 129.5 1037.0 117.5 1028.5 110.5 1015.0 101.5Z" fill="#4a0000" fill-rule="evenodd"/><path d="M1008.0 91.0 980.5 82.5 944.5 76.5 900.5 76.0 876.5 78.5 842.0 86.5 822.5 93.5 793.5 108.0 773.5 122.0 752.0 142.5 743.0 153.5 735.0 166.0 728.5 179.0 721.5 198.5 717.5 221.0 717.5 256.5 720.0 272.0 725.0 290.5 730.5 305.0 740.0 324.0 746.0 334.0 752.5 334.0 762.0 349.0 776.0 364.0 788.5 373.5 802.0 381.0 814.5 386.0 832.5 390.5 855.5 392.5 868.5 392.0 896.5 387.5 916.5 381.5 930.5 376.0 949.0 367.0 965.0 357.5 992.0 337.5 1001.0 329.5 1021.0 308.5 1032.0 294.5 1042.0 279.5 1048.5 268.0 1056.5 250.5 1062.5 232.5 1066.0 215.5 1067.0 207.0 1067.0 187.0 1064.0 168.5 1060.0 156.0 1050.0 136.5 1040.0 123.5 1031.0 114.5 1021.0 106.5 1007.0 98.0Z" fill="#4e0000" fill-rule="evenodd"/><path d="M999.0 88.0 982.5 83.0 966.0 79.5 937.0 76.0 892.5 76.5 866.0 80.5 842.0 86.5 822.5 93.5 793.5 108.0 778.0 118.5 767.0 127.5 752.0 142.5 744.5 151.5 735.0 166.0 728.5 179.0 721.0 200.5 718.0 216.5 717.0 229.5 717.0 248.0 718.5 264.0 722.5 282.5 730.5 305.0 741.5 326.5 749.0 326.5 759.5 343.5 776.0 360.5 785.5 367.5 800.5 375.5 814.5 380.5 828.0 383.5 842.5 385.0 857.0 385.0 872.0 383.5 893.5 379.0 912.0 373.0 928.5 366.0 947.5 356.0 962.5 346.5 975.5 337.0 991.5 323.5 1007.5 307.5 1017.0 296.5 1026.5 284.0 1036.5 268.5 1043.0 256.5 1051.5 236.5 1054.5 227.0 1058.5 208.5 1059.5 200.0 1059.5 181.0 1056.0 161.0 1051.0 147.0 1044.0 134.0 1035.5 122.5 1023.5 110.5 1010.0 100.5 998.5 94.0Z" fill="#500000" fill-rule="evenodd"/><path d="M991.0 85.5 966.0 79.5 944.5 76.5 900.5 76.0 876.5 78.5 842.0 86.5 812.5 98.0 786.5 112.5 767.0 127.5 752.0 142.5 744.5 151.5 735.0 166.0 728.5 179.0 721.0 200.5 718.0 216.5 717.0 229.5 718.0 260.5 721.0 276.5 725.0 290.5 730.5 305.0 737.5 319.0 745.5 318.5 756.5 337.0 765.0 347.0 772.0 353.5 783.0 361.5 794.0 367.5 807.0 372.5 822.0 376.0 836.5 377.5 856.0 377.0 873.0 374.5 885.5 371.5 902.5 366.0 917.0 360.0 936.5 350.0 955.5 338.0 982.0 317.0 994.0 305.5 1010.0 287.5 1021.5 272.0 1030.5 257.5 1037.5 244.0 1043.5 229.5 1047.0 218.5 1051.0 199.5 1052.0 187.5 1051.5 172.5 1049.5 160.5 1046.0 148.5 1035.5 128.0 1024.5 114.5 1014.5 105.5 1000.5 96.0 991.0 91.5Z" fill="#540000" fill-rule="evenodd"/><path d="M982.5 83.0 966.0 79.5 944.5 76.5 900.5 76.0 876.5 78.5 842.0 86.5 812.5 98.0 786.5 112.5 767.0 127.5 752.0 142.5 744.5 151.5 735.0 166.0 728.5 179.0 721.0 200.5 718.0 216.5 717.0 229.5 718.0 260.5 722.5 282.5 726.0 293.5 733.5 311.0 742.5 311.0 748.5 322.5 756.0 333.5 763.0 341.5 772.0 349.5 782.5 356.5 797.5 363.5 809.5 367.0 821.0 369.0 850.5 369.0 868.5 366.0 883.5 362.0 907.0 353.0 927.5 342.5 946.5 330.5 965.0 316.5 977.5 305.5 990.0 293.0 1004.5 276.0 1021.0 252.0 1029.5 236.0 1035.0 223.0 1039.5 209.0 1043.0 191.5 1043.0 163.0 1040.5 151.0 1036.5 139.5 1031.5 129.5 1025.5 120.5 1020.5 114.5 1007.5 102.5 996.5 95.0 983.0 88.5 982.0 87.5Z" fill="#560000" fill-rule="evenodd"/><path d="M1007.5 105.5 990.5 93.0 974.0 85.5 973.0 81.0 944.5 76.5 900.5 76.0 876.5 78.5 842.0 86.5 812.5 98.0 793.5 108.0 785.0 113.5 767.0 127.5 752.0 142.5 743.0 153.5 735.0 166.0 728.5 179.0 721.5 198.5 717.5 221.0 717.5 256.5 722.5 282.5 730.0 303.5 740.0 303.5 747.0 317.5 755.0 329.0 764.5 339.0 776.5 348.0 787.0 353.5 799.5 358.0 819.5 361.5 843.0 361.0 870.5 355.5 897.5 345.5 921.5 333.0 938.5 322.0 966.0 300.0 984.5 281.5 997.5 266.0 1009.5 249.0 1016.0 238.0 1023.5 223.0 1030.0 205.5 1033.5 191.5 1035.5 174.5 1035.0 160.0 1033.5 150.5 1029.0 136.0 1024.0 126.0 1016.0 114.5Z" fill="#5a0000" fill-rule="evenodd"/><path d="M1000.0 102.5 984.0 91.0 972.0 85.0 966.0 83.0 965.0 82.0 965.0 79.5 937.0 76.0 900.5 76.0 876.5 78.5 842.0 86.5 812.5 98.0 793.5 108.0 785.0 113.5 767.0 127.5 752.0 142.5 743.0 153.5 735.0 166.0 728.5 179.0 721.5 198.5 717.5 221.0 717.0 248.0 720.0 272.0 722.5 282.5 727.0 295.5 738.0 296.0 744.5 310.5 751.0 320.5 762.0 332.5 773.5 341.0 783.0 346.0 792.5 349.5 803.0 352.0 816.0 353.5 834.0 353.0 847.5 351.0 874.0 343.5 887.5 338.0 904.5 329.5 931.5 312.5 958.0 291.0 975.5 273.5 989.0 257.5 1002.0 239.0 1008.5 228.0 1016.0 212.5 1022.0 196.0 1026.5 173.0 1026.5 155.0 1024.5 143.0 1020.5 131.0 1014.5 119.5 1009.5 112.5Z" fill="#5c0000" fill-rule="evenodd"/><path d="M991.0 98.5 975.5 88.0 957.0 80.5 956.5 78.5 937.0 76.0 892.5 76.5 866.0 80.5 834.5 89.0 812.5 98.0 793.5 108.0 785.0 113.5 767.0 127.5 752.0 142.5 744.5 151.5 735.0 166.0 728.5 179.0 722.5 195.5 720.0 205.0 717.5 221.0 717.0 248.0 720.0 272.0 724.5 287.5 734.0 288.0 736.5 289.0 740.5 300.0 748.5 313.5 752.5 318.5 765.5 330.5 773.5 335.5 783.5 340.0 802.5 344.5 828.0 344.5 840.5 342.5 857.5 338.0 873.5 332.0 890.5 324.0 918.5 307.0 948.0 283.5 961.0 271.0 975.0 255.5 988.0 238.5 997.0 224.5 1005.0 209.5 1011.0 195.0 1015.5 179.5 1017.5 167.5 1018.0 154.0 1016.5 141.0 1013.0 129.0 1008.0 118.5 1001.0 108.5Z" fill="#600000" fill-rule="evenodd"/><path d="M984.0 96.5 971.0 87.5 958.0 81.5 949.5 79.0 948.0 77.0 937.0 76.0 892.5 76.5 866.0 80.5 834.5 89.0 812.5 98.0 793.5 108.0 785.0 113.5 767.0 127.5 752.0 142.5 741.0 156.5 735.0 166.0 728.5 179.0 721.5 198.5 717.5 221.0 717.5 256.5 722.0 279.5 733.5 280.5 734.5 281.5 738.0 291.5 747.0 307.5 751.0 312.5 762.5 323.0 769.5 327.5 779.5 332.0 788.0 334.5 801.0 336.5 815.5 336.5 824.5 335.5 851.0 329.0 879.0 317.0 895.0 308.0 909.5 298.5 940.0 274.0 965.5 247.5 978.0 231.5 987.0 218.0 993.5 206.5 1001.0 190.0 1005.0 178.0 1008.0 164.0 1008.0 138.5 1005.0 126.5 1000.0 115.5 993.0 105.5Z" fill="#620000" fill-rule="evenodd"/><path d="M979.5 97.0 966.0 87.0 951.0 80.0 939.5 76.5 892.5 76.5 866.0 80.5 834.5 89.0 812.5 98.0 793.5 108.0 785.0 113.5 767.0 127.5 752.0 142.5 741.0 156.5 735.0 166.0 728.5 179.0 721.5 198.5 717.5 221.0 717.0 248.0 720.0 271.5 733.0 273.5 735.0 281.0 742.0 296.0 748.5 305.0 756.5 313.0 771.0 322.0 781.0 325.5 791.5 327.5 805.5 328.0 816.0 327.0 827.0 325.0 844.0 320.0 860.0 313.5 873.0 307.0 897.5 292.0 912.5 281.0 928.0 268.0 952.5 243.5 964.5 229.0 975.5 213.5 983.0 201.0 990.5 185.5 995.5 171.5 998.5 158.5 999.5 150.0 999.0 135.0 997.0 125.5 992.5 114.0 987.5 106.0Z" fill="#660000" fill-rule="evenodd"/><path d="M969.5 93.0 960.5 86.5 951.0 81.5 934.5 76.0 892.5 76.5 866.0 80.5 834.5 89.0 812.5 98.0 793.5 108.0 785.0 113.5 767.0 127.5 752.0 142.5 741.0 156.5 735.0 166.0 728.5 179.0 721.5 198.5 718.0 216.5 717.0 248.0 718.5 263.5 732.0 266.0 735.5 279.0 739.5 287.5 747.5 299.0 756.0 307.0 762.0 311.0 770.5 315.0 788.5 319.0 802.5 319.0 811.0 318.0 824.5 315.0 837.0 311.0 866.0 297.5 890.5 282.0 907.0 269.5 921.5 257.0 945.0 233.0 956.5 219.0 969.0 201.0 982.0 176.0 986.5 163.0 989.5 149.0 989.5 129.0 987.0 118.5 982.5 108.5 976.5 100.0Z" fill="#680000" fill-rule="evenodd"/><path d="M962.0 91.5 948.5 82.5 931.0 76.0 900.5 76.0 876.5 78.5 842.0 86.5 822.5 93.5 793.5 108.0 778.0 118.5 767.0 127.5 752.0 142.5 744.5 151.5 735.0 166.0 728.5 179.0 722.5 195.5 718.0 216.5 717.0 229.5 717.5 255.5 731.0 258.5 732.5 266.5 735.5 275.0 739.5 283.0 745.5 291.5 751.5 297.5 758.5 302.5 765.5 306.0 775.5 309.0 781.5 310.0 797.5 310.0 818.0 306.0 840.5 297.5 864.0 285.0 891.5 266.0 916.0 245.0 938.0 222.0 954.0 201.5 965.0 184.0 971.5 171.0 977.0 156.0 980.5 136.0 979.5 121.5 977.5 114.0 973.0 104.5 968.0 97.5Z" fill="#6c0000" fill-rule="evenodd"/><path d="M959.5 95.5 953.5 89.5 945.0 83.5 938.0 80.0 926.5 76.0 900.5 76.0 876.5 78.5 842.0 86.5 822.5 93.5 793.5 108.0 778.0 118.5 767.0 127.5 752.0 142.5 744.5 151.5 735.0 166.0 728.5 179.0 722.5 195.5 718.5 213.0 717.0 229.5 717.0 247.0 730.0 250.5 734.5 268.0 738.0 275.5 743.0 283.0 752.5 292.0 758.0 295.5 766.5 299.0 776.0 301.0 792.0 301.0 801.5 299.5 821.5 293.5 844.0 283.0 867.5 268.5 893.5 248.5 916.5 227.0 933.5 208.0 950.0 185.5 962.5 162.5 967.0 150.5 969.5 140.5 970.5 133.5 970.5 122.0 969.0 113.5 966.5 106.5Z" fill="#6e0000" fill-rule="evenodd"/><path d="M951.5 94.5 944.0 87.0 939.0 83.5 930.0 79.0 921.0 76.0 900.5 76.0 876.5 78.5 842.0 86.5 822.5 93.5 793.5 108.0 778.0 118.5 767.0 127.5 752.0 142.5 744.5 151.5 735.0 166.0 728.5 179.0 722.5 195.5 718.5 213.0 717.0 239.0 728.0 242.0 730.0 243.5 731.0 252.0 733.5 260.5 738.0 270.0 742.5 276.5 748.5 282.5 753.5 286.0 766.0 291.0 772.0 292.0 786.0 292.0 801.5 289.0 819.5 282.5 840.0 272.0 863.0 257.0 884.0 240.5 908.5 217.5 925.0 199.0 940.5 178.0 952.0 157.5 959.5 135.5 960.5 129.0 960.5 116.5 957.0 103.5Z" fill="#720000" fill-rule="evenodd"/><path d="M942.0 92.0 937.0 87.0 929.0 81.5 915.0 76.0 892.5 76.5 866.0 80.5 842.0 86.5 812.5 98.0 786.5 112.5 767.0 127.5 752.0 142.5 744.5 151.5 735.0 166.0 728.5 179.0 722.5 195.5 718.5 213.0 717.0 231.0 729.5 235.0 730.5 243.5 733.5 255.0 741.0 268.5 750.5 277.0 762.5 282.0 768.0 283.0 780.0 283.0 793.5 280.5 810.5 274.5 832.0 263.5 856.0 247.5 876.0 231.5 904.5 204.0 917.5 189.0 934.0 166.0 941.5 152.5 948.0 136.0 950.5 124.0 950.5 112.0 949.0 105.0 945.5 97.0Z" fill="#740000" fill-rule="evenodd"/><path d="M932.0 89.5 922.0 81.5 908.0 76.0 892.5 76.5 866.0 80.5 842.0 86.5 812.5 98.0 786.5 112.5 767.0 127.5 752.0 142.5 744.5 151.5 735.0 166.0 728.5 179.0 722.5 195.5 718.5 213.0 717.5 222.5 730.0 227.5 730.5 237.0 734.0 250.0 737.5 257.0 742.0 263.0 746.5 267.0 754.5 271.5 766.0 274.0 781.0 273.0 795.5 269.0 814.5 260.5 831.5 250.5 852.5 235.5 875.0 216.5 897.0 194.5 913.0 175.5 924.5 159.0 933.5 142.5 939.0 127.0 940.5 118.5 940.5 109.0 938.0 99.0Z" fill="#780000" fill-rule="evenodd"/><path d="M922.5 88.0 913.5 81.0 902.0 76.5 892.5 76.5 876.5 78.5 842.0 86.5 822.5 93.5 793.5 108.0 778.0 118.5 767.0 127.5 752.0 142.5 744.5 151.5 735.0 166.0 728.5 179.0 720.0 205.0 718.5 214.5 730.5 219.0 730.5 227.5 732.5 238.5 735.0 245.5 740.0 253.5 749.0 261.0 760.0 264.5 772.0 264.5 788.5 260.5 806.5 252.5 821.0 244.0 841.0 230.0 866.0 209.0 888.5 186.5 902.5 170.0 915.0 152.5 924.0 136.0 929.5 119.5 930.5 107.5 928.0 96.5Z" fill="#7a0000" fill-rule="evenodd"/><path d="M912.5 86.5 906.0 81.5 893.0 76.5 866.0 80.5 842.0 86.5 822.5 93.5 793.5 108.0 778.0 118.5 767.0 127.5 752.0 142.5 744.5 151.5 735.0 166.0 728.5 179.0 721.0 200.5 720.0 206.0 731.5 211.0 731.0 218.0 732.5 230.0 736.0 240.0 740.0 246.0 745.0 250.5 750.5 253.5 759.5 255.5 770.0 255.0 784.5 251.0 803.5 242.0 818.0 233.0 834.5 221.0 858.0 201.0 879.0 180.0 889.5 168.0 906.0 145.5 914.0 131.0 919.5 114.5 920.0 102.0 918.5 96.0Z" fill="#7e0000" fill-rule="evenodd"/><path d="M905.5 89.0 898.5 82.5 886.5 77.5 866.0 80.5 842.0 86.5 822.5 93.5 793.5 108.0 778.0 118.5 767.0 127.5 752.0 142.5 741.0 156.5 735.0 166.0 728.5 179.0 722.0 197.0 732.5 202.5 732.0 212.5 733.5 224.5 735.5 230.5 740.5 238.5 745.5 242.5 755.5 246.0 767.5 245.5 779.5 242.0 795.5 234.5 814.5 222.5 845.0 198.0 874.5 168.5 891.0 148.0 900.0 134.0 907.0 119.0 909.5 109.0 909.5 99.0Z" fill="#800000" fill-rule="evenodd"/><path d="M895.0 88.0 887.0 81.5 878.0 78.5 866.0 80.5 842.0 86.5 822.5 93.5 793.5 108.0 778.0 118.5 767.0 127.5 752.0 142.5 743.0 153.5 735.0 166.0 728.5 179.0 725.0 188.5 734.5 194.0 733.5 201.0 734.0 215.0 736.5 223.5 739.5 228.5 745.0 233.5 753.5 236.5 761.5 236.5 775.0 233.0 788.0 227.0 805.0 216.5 818.5 206.5 837.5 190.5 868.5 159.0 882.0 142.0 889.5 130.5 896.5 116.0 899.0 106.5 899.0 97.0 897.0 91.0Z" fill="#840000" fill-rule="evenodd"/><path d="M884.5 87.5 880.5 84.0 875.5 81.5 869.0 80.0 834.5 89.0 812.5 98.0 793.5 108.0 778.0 118.5 767.0 127.5 752.0 142.5 743.0 153.5 735.0 166.0 728.5 179.0 737.0 184.5 735.5 192.0 735.0 204.0 737.0 214.0 741.0 221.0 746.0 225.0 753.0 227.0 762.0 226.5 774.5 222.5 785.5 217.0 801.0 207.0 830.5 183.0 848.5 165.5 862.0 150.5 874.0 135.0 881.5 123.0 885.5 114.5 888.5 103.5 888.5 96.5 887.0 91.5Z" fill="#860000" fill-rule="evenodd"/><path d="M874.0 88.0 867.5 83.5 860.0 82.0 834.5 89.0 812.5 98.0 793.5 108.0 778.0 118.5 767.0 127.5 752.0 142.5 744.5 151.5 733.0 170.0 740.5 175.0 737.5 186.5 737.0 198.5 739.0 207.0 741.5 211.5 745.5 215.0 751.0 217.0 758.5 217.0 770.5 213.5 781.5 208.0 792.5 201.0 809.0 188.5 824.0 175.5 850.0 149.0 861.0 135.5 870.0 122.0 875.5 110.5 877.5 103.0 877.5 95.0Z" fill="#8a0000" fill-rule="evenodd"/><path d="M864.0 90.0 857.5 85.5 850.0 84.5 822.5 93.5 793.5 108.0 778.0 118.5 767.0 127.5 752.0 142.5 739.5 159.0 740.0 160.5 745.0 164.0 741.5 173.5 739.5 184.0 740.0 195.0 743.0 202.0 747.0 205.5 751.5 207.0 760.0 206.5 770.0 203.0 779.5 198.0 791.5 190.0 819.0 167.0 835.0 151.0 846.0 138.5 859.5 119.5 864.0 110.5 866.5 102.0 866.5 96.0Z" fill="#8c0000" fill-rule="evenodd"/><path d="M852.5 91.5 848.0 88.5 841.0 87.0 822.5 93.5 793.5 108.0 778.0 118.5 767.0 127.5 752.0 142.5 748.0 148.0 751.5 151.5 746.5 162.0 742.5 178.0 743.0 187.0 745.5 192.5 747.5 194.5 752.5 196.5 757.0 196.5 766.0 194.0 783.0 184.5 808.5 164.0 829.0 143.5 847.0 120.5 852.0 111.5 855.0 102.0 855.0 97.0Z" fill="#900000" fill-rule="evenodd"/><path d="M841.5 95.5 838.0 92.5 831.5 91.0 822.5 93.5 793.5 108.0 778.0 118.5 764.5 130.0 765.5 131.5 755.5 145.5 748.0 162.5 746.5 169.5 746.5 176.5 749.0 182.5 753.0 185.0 759.5 185.0 766.0 183.0 779.5 175.5 802.0 157.5 820.0 139.5 836.0 119.0 841.0 109.5 843.0 101.0Z" fill="#920000" fill-rule="evenodd"/><path d="M826.5 98.0 819.0 96.5 815.5 97.0 808.5 100.0 785.0 113.5 779.5 117.5 770.0 127.0 761.0 139.0 754.0 152.5 752.0 159.5 751.5 165.5 753.0 170.0 755.0 172.0 758.0 173.0 764.5 172.0 775.5 166.5 791.5 154.5 810.5 136.0 820.0 124.5 828.0 111.0 829.5 106.0 829.5 102.5Z" fill="#960000" fill-rule="evenodd"/><path d="M812.0 105.5 807.5 104.5 798.5 107.0 789.5 112.0 780.5 119.0 773.0 126.5 764.5 138.0 760.0 148.0 760.0 156.0 762.5 158.0 769.5 157.0 778.5 152.0 792.0 141.0 802.5 130.0 810.5 119.0 813.0 114.0 814.0 109.5Z" fill="#980000" fill-rule="evenodd"/></g><g shape-rendering="crispEdges" style="mix-blend-mode:plus-lighter"><polygon points="870.0,246.0 820.0,188.0 889.0,215.0" fill="url(#hr0)"/><polygon points="820.0,188.0 790.0,153.2 900.4,196.4" fill="url(#hr1)"/><polygon points="820.0,188.0 900.4,196.4 889.0,215.0" fill="url(#hr2)"/><polygon points="870.0,246.0 889.0,215.0 910.0,242.0" fill="url(#hr3)"/><polygon points="889.0,215.0 900.4,196.4 934.0,239.6" fill="url(#hr4)"/><polygon points="889.0,215.0 934.0,239.6 910.0,242.0" fill="url(#hr5)"/><polygon points="870.0,246.0 910.0,242.0 867.0,288.0" fill="url(#hr6)"/><polygon points="910.0,242.0 934.0,239.6 865.2,313.2" fill="url(#hr7)"/><polygon points="910.0,242.0 865.2,313.2 867.0,288.0" fill="url(#hr8)"/><polygon points="870.0,246.0 867.0,288.0 848.0,264.0" fill="url(#hr9)"/><polygon points="867.0,288.0 865.2,313.2 834.8,274.8" fill="url(#hr10)"/><polygon points="867.0,288.0 834.8,274.8 848.0,264.0" fill="url(#hr11)"/><polygon points="870.0,246.0 848.0,264.0 801.0,215.0" fill="url(#hr12)"/><polygon points="848.0,264.0 834.8,274.8 759.6,196.4" fill="url(#hr13)"/><polygon points="848.0,264.0 759.6,196.4 801.0,215.0" fill="url(#hr14)"/><polygon points="870.0,246.0 801.0,215.0 820.0,188.0" fill="url(#hr15)"/><polygon points="801.0,215.0 759.6,196.4 790.0,153.2" fill="url(#hr16)"/><polygon points="801.0,215.0 790.0,153.2 820.0,188.0" fill="url(#hr17)"/></g></g></svg>
<div class="t" style="left:22px;top:802px;letter-spacing:-0.14px">MO ( (MO = 3) ; Isovalue = 0.02 )</div>
<div class="a" style="left:1687px;top:28px;width:228px;height:803px;background:#fff;border:1px solid #828790;overflow:hidden" id="mol"><div class="a" style="left:9px;top:579px;width:158px;height:27px;background:#ffff00"></div>
<div class="a" style="left:9px;top:610px;width:158px;height:27px;background:#ffff00"></div>
<div class="a" style="left:9px;top:606px;width:162px;height:2px;background:repeating-linear-gradient(90deg,#00e000 0 2px,transparent 2px 4px)"></div>
<div class="t mn" style="right:200px;top:742px">1</div>
<div class="a" style="left:34px;top:748px;width:57px;height:1px;background:#000"></div>
<div class="a box" style="left:49px;top:735px"><svg width="23" height="23" style="position:absolute;left:0;top:0"><path d="M8.5 4V21M8.5 4L4.5 11M12.5 4V21M12.5 21L16.5 14" stroke="#ff0000" stroke-width="1.3" fill="none"/></svg></div>
<div class="t mn" style="right:60px;top:742px;color:#0000ff">&#8211;19.13799</div>
<div class="a chk" style="left:181px;top:743px;background:#c0c0c0"></div>
<div class="t mn" style="right:200px;top:711px">2</div>
<div class="a" style="left:34px;top:717px;width:57px;height:1px;background:#000"></div>
<div class="a box" style="left:49px;top:704px"><svg width="23" height="23" style="position:absolute;left:0;top:0"><path d="M8.5 4V21M8.5 4L4.5 11M12.5 4V21M12.5 21L16.5 14" stroke="#ff0000" stroke-width="1.3" fill="none"/></svg></div>
<div class="t mn" style="right:60px;top:711px;color:#0000ff">&#8211;0.99736</div>
<div class="a chk" style="left:181px;top:712px;background:#c0c0c0"></div>
<div class="t mn" style="right:200px;top:680px">3</div>
<div class="a" style="left:34px;top:686px;width:57px;height:1px;background:#000"></div>
<div class="a box" style="left:49px;top:673px"><svg width="23" height="23" style="position:absolute;left:0;top:0"><path d="M8.5 4V21M8.5 4L4.5 11M12.5 4V21M12.5 21L16.5 14" stroke="#ff0000" stroke-width="1.3" fill="none"/></svg></div>
<div class="t mn" style="right:60px;top:680px;color:#0000ff">&#8211;0.51503</div>
<div class="a chk" style="left:181px;top:681px;background:#ff0000;box-shadow:none"></div>
<div class="t mn" style="right:200px;top:649px">4</div>
<div class="a" style="left:34px;top:655px;width:57px;height:1px;background:#000"></div>
<div class="a box" style="left:49px;top:642px"><svg width="23" height="23" style="position:absolute;left:0;top:0"><path d="M8.5 4V21M8.5 4L4.5 11M12.5 4V21M12.5 21L16.5 14" stroke="#ff0000" stroke-width="1.3" fill="none"/></svg></div>
<div class="t mn" style="right:60px;top:649px;color:#0000ff">&#8211;0.37102</div>
<div class="a chk" style="left:181px;top:650px;background:#c0c0c0"></div>
<div class="t mn" style="right:200px;top:618px">5</div>
<div class="a" style="left:34px;top:624px;width:57px;height:1px;background:#000"></div>
<div class="a box" style="left:49px;top:611px"><svg width="23" height="23" style="position:absolute;left:0;top:0"><path d="M8.5 4V21M8.5 4L4.5 11M12.5 4V21M12.5 21L16.5 14" stroke="#ff0000" stroke-width="1.3" fill="none"/></svg></div>
<div class="t mn" style="right:60px;top:618px;color:#0000ff">&#8211;0.29197</div>
<div class="a chk" style="left:181px;top:619px;background:#c0c0c0"></div>
<div class="t mn" style="right:200px;top:587px">6</div>
<div class="a" style="left:34px;top:593px;width:57px;height:1px;background:#000"></div>
<div class="a box" style="left:49px;top:580px"></div>
<div class="t mn" style="right:60px;top:587px;color:#0000ff">0.06538</div>
<div class="a chk" style="left:181px;top:588px;background:#c0c0c0"></div>
<div class="t mn" style="right:200px;top:556px">7</div>
<div class="a" style="left:34px;top:562px;width:57px;height:1px;background:#000"></div>
<div class="a box" style="left:49px;top:549px"></div>
<div class="t mn" style="right:60px;top:556px;color:#0000ff">0.15127</div>
<div class="a chk" style="left:181px;top:557px;background:#c0c0c0"></div>
<div class="t mn" style="right:200px;top:525px">8</div>
<div class="a" style="left:34px;top:531px;width:57px;height:1px;background:#000"></div>
<div class="a box" style="left:49px;top:518px"></div>
<div class="t mn" style="right:60px;top:525px;color:#0000ff">0.75691</div>
<div class="a chk" style="left:181px;top:526px;background:#c0c0c0"></div>
<div class="t mn" style="right:200px;top:494px">9</div>
<div class="a" style="left:34px;top:500px;width:57px;height:1px;background:#000"></div>
<div class="a box" style="left:49px;top:487px"></div>
<div class="t mn" style="right:60px;top:494px;color:#0000ff">0.80557</div>
<div class="a chk" style="left:181px;top:495px;background:#c0c0c0"></div>
<div class="t mn" style="right:200px;top:463px">10</div>
<div class="a" style="left:34px;top:469px;width:57px;height:1px;background:#000"></div>
<div class="a box" style="left:49px;top:456px"></div>
<div class="t mn" style="right:60px;top:463px;color:#0000ff">0.89135</div>
<div class="a chk" style="left:181px;top:464px;background:#c0c0c0"></div>
<div class="t mn" style="right:200px;top:432px">11</div>
<div class="a" style="left:34px;top:438px;width:57px;height:1px;background:#000"></div>
<div class="a box" style="left:49px;top:425px"></div>
<div class="t mn" style="right:60px;top:432px;color:#0000ff">0.89354</div>
<div class="a chk" style="left:181px;top:433px;background:#c0c0c0"></div>
<div class="t mn" style="right:200px;top:401px">12</div>
<div class="a" style="left:34px;top:407px;width:57px;height:1px;background:#000"></div>
<div class="a box" style="left:49px;top:394px"></div>
<div class="t mn" style="right:60px;top:401px;color:#0000ff">1.01558</div>
<div class="a chk" style="left:181px;top:402px;background:#c0c0c0"></div>
<div class="t mn" style="right:200px;top:370px">13</div>
<div class="a" style="left:34px;top:376px;width:57px;height:1px;background:#000"></div>
<div class="a box" style="left:49px;top:363px"></div>
<div class="t mn" style="right:60px;top:370px;color:#0000ff">1.17538</div>
<div class="a chk" style="left:181px;top:371px;background:#c0c0c0"></div>
<div class="t mn" style="right:200px;top:339px">14</div>
<div class="a" style="left:34px;top:345px;width:57px;height:1px;background:#000"></div>
<div class="a box" style="left:49px;top:332px"></div>
<div class="t mn" style="right:60px;top:339px;color:#0000ff">1.52951</div>
<div class="a chk" style="left:181px;top:340px;background:#c0c0c0"></div>
<div class="t mn" style="right:200px;top:308px">15</div>
<div class="a" style="left:34px;top:314px;width:57px;height:1px;background:#000"></div>
<div class="a box" style="left:49px;top:301px"></div>
<div class="t mn" style="right:60px;top:308px;color:#0000ff">1.53770</div>
<div class="a chk" style="left:181px;top:309px;background:#c0c0c0"></div>
<div class="t mn" style="right:200px;top:277px">16</div>
<div class="a" style="left:34px;top:283px;width:57px;height:1px;background:#000"></div>
<div class="a box" style="left:49px;top:270px"></div>
<div class="t mn" style="right:60px;top:277px;color:#0000ff">1.64365</div>
<div class="a chk" style="left:181px;top:278px;background:#c0c0c0"></div>
<div class="t mn" style="right:200px;top:246px">17</div>
<div class="a" style="left:34px;top:252px;width:57px;height:1px;background:#000"></div>
<div class="a box" style="left:49px;top:239px"></div>
<div class="t mn" style="right:60px;top:246px;color:#0000ff">2.23883</div>
<div class="a chk" style="left:181px;top:247px;background:#c0c0c0"></div>
<div class="t mn" style="right:200px;top:215px">18</div>
<div class="a" style="left:34px;top:221px;width:57px;height:1px;background:#000"></div>
<div class="a box" style="left:49px;top:208px"></div>
<div class="t mn" style="right:60px;top:215px;color:#0000ff">2.26829</div>
<div class="a chk" style="left:181px;top:216px;background:#c0c0c0"></div>
<div class="t mn" style="right:200px;top:184px">19</div>
<div class="a" style="left:34px;top:190px;width:57px;height:1px;background:#000"></div>
<div class="a box" style="left:49px;top:177px"></div>
<div class="t mn" style="right:60px;top:184px;color:#0000ff">2.45030</div>
<div class="a chk" style="left:181px;top:185px;background:#c0c0c0"></div>
<div class="t mn" style="right:200px;top:153px">20</div>
<div class="a" style="left:34px;top:159px;width:57px;height:1px;background:#000"></div>
<div class="a box" style="left:49px;top:146px"></div>
<div class="t mn" style="right:60px;top:153px;color:#0000ff">2.64115</div>
<div class="a chk" style="left:181px;top:154px;background:#c0c0c0"></div>
<div class="t mn" style="right:200px;top:122px">21</div>
<div class="a" style="left:34px;top:128px;width:57px;height:1px;background:#000"></div>
<div class="a box" style="left:49px;top:115px"></div>
<div class="t mn" style="right:60px;top:122px;color:#0000ff">2.66686</div>
<div class="a chk" style="left:181px;top:123px;background:#c0c0c0"></div>
<div class="t mn" style="right:200px;top:91px">22</div>
<div class="a" style="left:34px;top:97px;width:57px;height:1px;background:#000"></div>
<div class="a box" style="left:49px;top:84px"></div>
<div class="t mn" style="right:60px;top:91px;color:#0000ff">3.02806</div>
<div class="a chk" style="left:181px;top:92px;background:#c0c0c0"></div>
<div class="t mn" style="right:200px;top:60px">23</div>
<div class="a" style="left:34px;top:66px;width:57px;height:1px;background:#000"></div>
<div class="a box" style="left:49px;top:53px"></div>
<div class="t mn" style="right:60px;top:60px;color:#0000ff">3.30740</div>
<div class="a chk" style="left:181px;top:61px;background:#c0c0c0"></div>
<div class="t mn" style="right:200px;top:29px">24</div>
<div class="a" style="left:34px;top:35px;width:57px;height:1px;background:#000"></div>
<div class="a box" style="left:49px;top:22px"></div>
<div class="t mn" style="right:60px;top:29px;color:#0000ff">3.53165</div>
<div class="a chk" style="left:181px;top:30px;background:#c0c0c0"></div>
<div class="t mn" style="right:200px;top:-2px">25</div>
<div class="a" style="left:34px;top:4px;width:57px;height:1px;background:#000"></div>
<div class="a box" style="left:49px;top:-9px"></div>
<div class="t mn" style="right:60px;top:-2px;color:#0000ff">3.69299</div>
<div class="a chk" style="left:181px;top:-1px;background:#c0c0c0"></div>
<div class="a" style="left:209px;top:0;width:17px;height:801px;background:linear-gradient(90deg,#e3e3e3,#efefef 30%,#f2f2f2)"></div>
<div class="a" style="left:215px;top:7px;width:0;height:0;border-left:4px solid transparent;border-right:4px solid transparent;border-bottom:4px solid #303030"></div>
<div class="a" style="left:215px;top:791px;width:0;height:0;border-left:4px solid transparent;border-right:4px solid transparent;border-top:4px solid #303030"></div>
<div class="a" style="left:210px;top:75px;width:15px;height:708px;border:1px solid #959595;border-radius:2px;background:linear-gradient(90deg,#f3f3f3,#e8e8e8 40%,#d6d6db 45%,#c6c6cc 90%,#bdbdc2)"></div>
<div class="a" style="left:215px;top:425px;width:6px;height:1px;background:#404040;box-shadow:0 1px 0 #fff"></div>
<div class="a" style="left:215px;top:428px;width:6px;height:1px;background:#404040;box-shadow:0 1px 0 #fff"></div>
<div class="a" style="left:215px;top:431px;width:6px;height:1px;background:#404040;box-shadow:0 1px 0 #fff"></div></div>
<div class="t" style="left:10px;top:845px">Charge:</div>
<div class="inp" style="left:54px;top:841px;width:29px;height:19px"></div>
<div class="t" style="left:57px;top:845px">0</div>
<div class="t" style="left:99px;top:845px">Spin:</div>
<div class="cmb" style="left:129px;top:841px;width:71px;height:18px"><div class="cbtn"></div></div>
<div class="t" style="left:134px;top:844px">Singlet</div>
<div class="t" style="left:217px;top:843px;font-size:12px">Gaussian MOs from:  H:/1styearlab/H2O_optimization.chk</div>
<div class="a" style="left:5px;top:893px;width:1910px;height:104px;background:#fff;border:1px solid #898c95;border-bottom:none"></div>
<div class="tab" style="left:6px;top:872px;width:69px;height:21px"></div>
<div class="tab" style="left:138px;top:872px;width:74px;height:21px"></div>
<div class="tab" style="left:212px;top:872px;width:61px;height:21px"></div>
<div class="a" style="left:74px;top:870px;width:65px;height:24px;background:#fff;border:1px solid #898c95;border-bottom:none"></div>
<div class="t" style="left:14px;top:877px">New MOs</div>
<div class="t" style="left:83px;top:875px">Visualize</div>
<div class="t" style="left:145px;top:877px">Calculation</div>
<div class="t" style="left:220px;top:877px">Diagram</div>
<div class="t" style="left:569px;top:908px">Isovalue:</div>
<div class="inp" style="left:618px;top:904px;width:45px;height:19px"></div>
<div class="t" style="left:621px;top:908px">0.02</div>
<div class="t" style="left:1224px;top:908px">Cube Grid:</div>
<div class="cmb" style="left:1281px;top:904px;width:71px;height:18px"><div class="cbtn"></div></div>
<div class="t" style="left:1285px;top:907px">Coarse</div>
<div class="t" style="left:11px;top:937px">Add Type:</div>
<div class="cmb" style="left:67px;top:933px;width:101px;height:18px"><div class="cbtn"></div></div>
<div class="t" style="left:72px;top:936px">All</div>
<div class="t" style="left:184px;top:937px">Add List:</div>
<div class="inp" style="left:231px;top:933px;width:1678px;height:19px"></div>
<div class="t" style="left:234px;top:937px">1a-25a</div>
<div class="t" style="left:11px;top:968px">Current List:</div>
<div class="inp" style="left:74px;top:964px;width:1740px;height:19px"></div>
<div class="t" style="left:78px;top:968px;color:#6d6d6d">1a-25a</div>
<div class="btn" style="left:1830px;top:963px;width:78px;height:21px"></div>
<div class="t" style="left:1843px;top:968px">Update ...</div>
<div class="a" style="left:5px;top:1003px;width:1910px;height:2px;background:#a0a0a0;border-bottom:1px solid #fff"></div>
<div class="btn" style="left:836px;top:1012px;width:78px;height:21px"></div>
<div class="t" style="left:836px;top:1017px;width:78px;text-align:center">Ok</div>
<div class="btn" style="left:921px;top:1012px;width:78px;height:21px"></div>
<div class="t" style="left:921px;top:1017px;width:78px;text-align:center">Cancel</div>
<div class="btn" style="left:1006px;top:1012px;width:78px;height:21px"></div>
<div class="t" style="left:1006px;top:1017px;width:78px;text-align:center">Help</div>
<div class="a" style="left:0;top:1040px;width:1920px;height:40px;background:linear-gradient(90deg,#a3bcd9 0px,#a6bfdc 1722px,#8798ae 1750px,#8293aa 1920px);border-top:1px solid #2e3440"></div>
<div class="t" style="left:1852px;top:1047px;color:#fff;font-size:12px">14:21</div>
<div class="t" style="left:1835px;top:1063px;color:#fff;font-size:12px">19/02/2016</div>
<div class="a" style="left:1821px;top:2px;width:31px;height:17px;border:1px solid #52627a;border-radius:3px;background:linear-gradient(#cddcee 0%,#c0d3e9 45%,#97b3d2 50%,#a5c0dd 80%,#bcd4ee 100%);box-shadow:inset 0 0 0 1px rgba(255,255,255,0.55)"></div>
<div class="a" style="left:1854px;top:2px;width:31px;height:17px;border:1px solid #52627a;border-radius:3px;background:linear-gradient(#cddcee 0%,#c0d3e9 45%,#97b3d2 50%,#a5c0dd 80%,#bcd4ee 100%);box-shadow:inset 0 0 0 1px rgba(255,255,255,0.55)"></div>
<div class="a" style="left:1887px;top:2px;width:31px;height:17px;border:1px solid #4d0d16;border-radius:3px;background:linear-gradient(#eeb4a6 0%,#e39a86 45%,#c7452b 50%,#d0583d 80%,#e08a70 100%);box-shadow:inset 0 0 0 1px rgba(255,255,255,0.55)"></div>
<div class="a" style="left:1831px;top:10px;width:11px;height:5px;background:#f4f4f4;border:1px solid #3c4452;border-radius:2px"></div>
<div class="a" style="left:1867px;top:5px;width:9px;height:8px;background:#f4f4f4;border:1px solid #3c4452;border-radius:1px"></div>
<div class="a" style="left:1871px;top:8px;width:3px;height:2px;background:#3c4452"></div>
<div class="a" style="left:1863px;top:8px;width:9px;height:8px;background:#f4f4f4;border:1px solid #3c4452;border-radius:1px"></div>
<div class="a" style="left:1866px;top:11px;width:3px;height:2px;background:#3c4452"></div>
<svg class="a" style="left:1890px;top:2px" width="26" height="17"><path d="M9 5.5L16 11.5M16 5.5L9 11.5" stroke="#3a2a30" stroke-width="4.6" stroke-linecap="round"/><path d="M9 5.5L16 11.5M16 5.5L9 11.5" stroke="#f4f4f4" stroke-width="2.6" stroke-linecap="round"/></svg>
<div class="a" style="left:5px;top:2px;width:13px;height:16px;background:#fff;border:1px solid #000"></div>
<svg class="a" style="left:6px;top:3px" width="12" height="15"><path d="M5.5 4V9L2.5 12.5M5.5 9L9.5 12.5" stroke="#8a8a8a" stroke-width="1.2" fill="none"/><rect x="4" y="2" width="3" height="3" fill="#707070"/><rect x="1" y="11" width="3" height="3" fill="#707070"/><rect x="8" y="11" width="3" height="3" fill="#707070"/><rect x="4" y="8" width="3" height="2" fill="#909090"/></svg>
<div class="a" style="left:15px;top:3px;width:2px;height:2px;background:#00c000"></div>
<div class="a" style="left:2px;top:4px;width:6px;height:6px;background:#00e000;border:1px solid #000"></div>
<div class="a" style="left:0;top:1041px;width:110px;height:39px;background:linear-gradient(90deg,#8292a7 0%,#8595aa 30%,#a5bedb 80%,rgba(165,190,219,0))"></div>
<div class="a" style="left:308px;top:1041px;width:59px;height:38px;border:1px solid #6f7d8f;border-radius:3px;background:linear-gradient(160deg,rgba(255,255,255,0.55),rgba(255,255,255,0.15) 60%,rgba(255,255,255,0.05));box-shadow:inset 0 0 0 1px rgba(255,255,255,0.45)"></div>
<div class="a" style="left:370px;top:1041px;width:54px;height:38px;border:1px solid #6f7d8f;border-radius:3px;background:linear-gradient(160deg,rgba(255,255,255,0.55),rgba(255,255,255,0.15) 60%,rgba(255,255,255,0.05));box-shadow:inset 0 0 0 1px rgba(255,255,255,0.45)"></div>
<div class="a" style="left:432px;top:1041px;width:59px;height:38px;border:1px solid #6f7d8f;border-radius:3px;background:linear-gradient(160deg,rgba(255,255,255,0.55),rgba(255,255,255,0.15) 60%,rgba(255,255,255,0.05));box-shadow:inset 0 0 0 1px rgba(255,255,255,0.45)"></div>
<div class="a" style="left:425px;top:1041px;width:3px;height:38px;border:1px solid #6f7d8f;border-radius:2px;background:rgba(255,255,255,0.3)"></div>
<svg class="a" style="left:7px;top:1041px" width="40" height="39">
<defs><radialGradient id="orb" cx="50%" cy="40%" r="55%"><stop offset="0" stop-color="#3d7fb8"/><stop offset="0.7" stop-color="#164a7c"/><stop offset="1" stop-color="#0d3057"/></radialGradient>
<radialGradient id="orbb" cx="50%" cy="100%" r="50%"><stop offset="0" stop-color="#3ee0ff"/><stop offset="1" stop-color="#3ee0ff" stop-opacity="0"/></radialGradient></defs>
<circle cx="19.5" cy="19" r="18" fill="url(#orb)" stroke="#0b2a4a" stroke-width="1"/>
<circle cx="19.5" cy="19" r="18" fill="url(#orbb)"/>
<path d="M10 11 Q14 8 18.5 10.5 L17 18 Q13 16 8.5 18.5Z" fill="#f0602a"/>
<path d="M20 11 Q24 13.5 29 11 L27.5 19 Q23 21 18.5 18.5Z" fill="#8cc63f"/>
<path d="M8.5 19.5 Q13 17 17 19 L15.5 27 Q11 25 7 27.5Z" fill="#2aa3e6"/>
<path d="M18.5 19.5 Q23 22 27.5 20 L26 28 Q21.5 30 17 27.5Z" fill="#fbbc26"/>
<ellipse cx="19.5" cy="11" rx="13" ry="7" fill="#fff" opacity="0.18"/>
</svg>
<svg class="a" style="left:72px;top:1042px" width="36" height="36">
<defs><linearGradient id="ieg" x1="0" y1="0" x2="0" y2="1"><stop offset="0" stop-color="#7ad8f8"/><stop offset="1" stop-color="#1c8fd6"/></linearGradient></defs>
<path d="M27.5 18.5 A9.5 9.5 0 1 0 25 25" stroke="#1576b8" stroke-width="6.6" fill="none"/>
<path d="M27.5 18.5 A9.5 9.5 0 1 0 25 25" stroke="url(#ieg)" stroke-width="5" fill="none"/>
<rect x="11" y="16.5" width="17" height="4" fill="#3aaee8"/>
<path d="M4 30 Q0 35 9 31 Q22 24 31 10 Q35 3 29 5 Q27 6 25 7.5" stroke="#f2b705" stroke-width="2.6" fill="none" stroke-linecap="round"/>
</svg>
<svg class="a" style="left:134px;top:1046px" width="34" height="31">
<path d="M2 4 H11 L13 6 H30 V28 H2Z" fill="#f3dc8e" stroke="#c8a852" stroke-width="1"/>
<rect x="5" y="3" width="8" height="4" fill="#fff"/><rect x="5" y="3" width="3" height="2" fill="#13b41f"/>
<rect x="12" y="5" width="8" height="3" fill="#fff"/><rect x="13" y="5" width="3" height="2" fill="#d92b2b"/>
<rect x="19" y="6" width="9" height="3" fill="#fff"/><rect x="20" y="6" width="3" height="2" fill="#2b8ae8"/>
<path d="M2 10 H30 V28 H2Z" fill="#f8e4a2" stroke="#c8a852" stroke-width="1"/>
<path d="M6 29 V20 Q6 18 8 18 H24 Q26 18 26 20 V29 H21 V24 H11 V29Z" fill="#8fd0f2" stroke="#3c9ad4" stroke-width="1"/>
</svg>
<svg class="a" style="left:197px;top:1047px" width="34" height="30">
<rect x="3" y="2" width="23" height="24" fill="#bcd9ee" stroke="#6aa9d6" stroke-width="1"/>
<rect x="26" y="3" width="2" height="23" fill="#d6e8f5" stroke="#6aa9d6" stroke-width="0.6"/>
<circle cx="12.5" cy="13.5" r="8.5" fill="#f07a1c" stroke="#d05a10" stroke-width="1"/>
<path d="M9.5 8.5 L17.5 13.5 L9.5 18.5Z" fill="#fff"/>
</svg>
<svg class="a" style="left:258px;top:1043px" width="34" height="34">
<defs><radialGradient id="ffg" cx="60%" cy="40%" r="60%"><stop offset="0" stop-color="#3c8fd6"/><stop offset="1" stop-color="#1d3f86"/></radialGradient></defs>
<circle cx="17" cy="17" r="14.5" fill="url(#ffg)"/>
<path d="M5 9 Q3 18 8 25 Q14 32 23 30 Q30 27 31.5 18 Q29 26 21 26 Q13 25 14 19 Q17 21 20 19 Q14 17 13 13 Q9 12 8 9 Q7 11 5 9Z" fill="#e8561d"/>
<path d="M8 9 Q9 5 13 4 Q11 7 13 9Z" fill="#f59b26"/>
<path d="M29 10 Q33 15 31 22" stroke="#f7c531" stroke-width="2" fill="none"/>
</svg>
<svg class="a" style="left:322px;top:1045px" width="30" height="30">
<path d="M15 15 L15 0.5 A14.5 14.5 0 0 1 27.56 7.75Z" fill="#db4437"/>
<path d="M15 0.5 A14.5 14.5 0 0 0 2.44 7.75 L15 15Z" fill="#db4437"/>
<path d="M2.44 7.75 A14.5 14.5 0 0 0 15 29.5 L15 15Z" fill="#0f9d58"/>
<path d="M15 29.5 A14.5 14.5 0 0 0 27.56 7.75 L15 15Z" fill="#f4c20d"/>
<circle cx="15" cy="15" r="6.5" fill="#fff"/><circle cx="15" cy="15" r="5.2" fill="#4285f4"/>
</svg>
<svg class="a" style="left:378px;top:1043px" width="40" height="34">
<line x1="8" y1="5" x2="12" y2="12" stroke="#888" stroke-width="2"/>
<circle cx="8" cy="4" r="2.5" fill="#ddd" stroke="#666" stroke-width="1.2"/>
<circle cx="13" cy="17" r="7" fill="#a9a3d8" stroke="#555" stroke-width="2"/>
<line x1="20" y1="15" x2="25" y2="14" stroke="#888" stroke-width="2"/>
<rect x="25" y="10" width="6" height="6" fill="#e0401a" stroke="#8a2a10" stroke-width="1"/>
<path d="M16 24 L21 30" stroke="#c9a040" stroke-width="3"/>
</svg>
<svg class="a" style="left:445px;top:1044px" width="32" height="32">
<rect x="12" y="4" width="18" height="23" fill="#fff" stroke="#2b579a" stroke-width="1.2"/>
<path d="M15 8H28M15 11H28M15 14H28M15 17H28M15 20H28M15 23H28" stroke="#2b579a" stroke-width="1"/>
<path d="M1 4 L19 1 V31 L1 28Z" fill="#2b579a"/>
<path d="M3.5 10.5 L5.5 21 L7.8 13 L10 21 L12 10.5" stroke="#fff" stroke-width="1.8" fill="none"/>
</svg>
<div class="a" style="left:1757px;top:1057px;width:0;height:0;border-left:4px solid transparent;border-right:4px solid transparent;border-bottom:4px solid #eef2f8"></div>
<svg class="a" style="left:1777px;top:1052px" width="18" height="18">
<rect x="6" y="3" width="9" height="8" fill="#4f6070" stroke="#fff" stroke-width="1.2"/>
<path d="M8 14H13M10.5 11V14" stroke="#fff" stroke-width="1.2"/>
<path d="M2 1V5H5V1M3.5 5V15H8" stroke="#fff" stroke-width="1.2" fill="none"/>
</svg>
<svg class="a" style="left:1801px;top:1052px" width="18" height="16">
<path d="M2 6H5L9 2V14L5 10H2Z" fill="#e8ecf0" stroke="#50606f" stroke-width="0.6"/>
<path d="M11 6Q12.5 8 11 10M13 4Q16 8 13 12" stroke="#fff" stroke-width="1.2" fill="none"/>
</svg>
<div class="a" style="left:1906px;top:1041px;width:14px;height:39px;border-left:1px solid #5d6b7c;background:linear-gradient(#8a99ad,#606f82);box-shadow:inset 1px 0 0 #a8b6c8"></div>
</body></html>
